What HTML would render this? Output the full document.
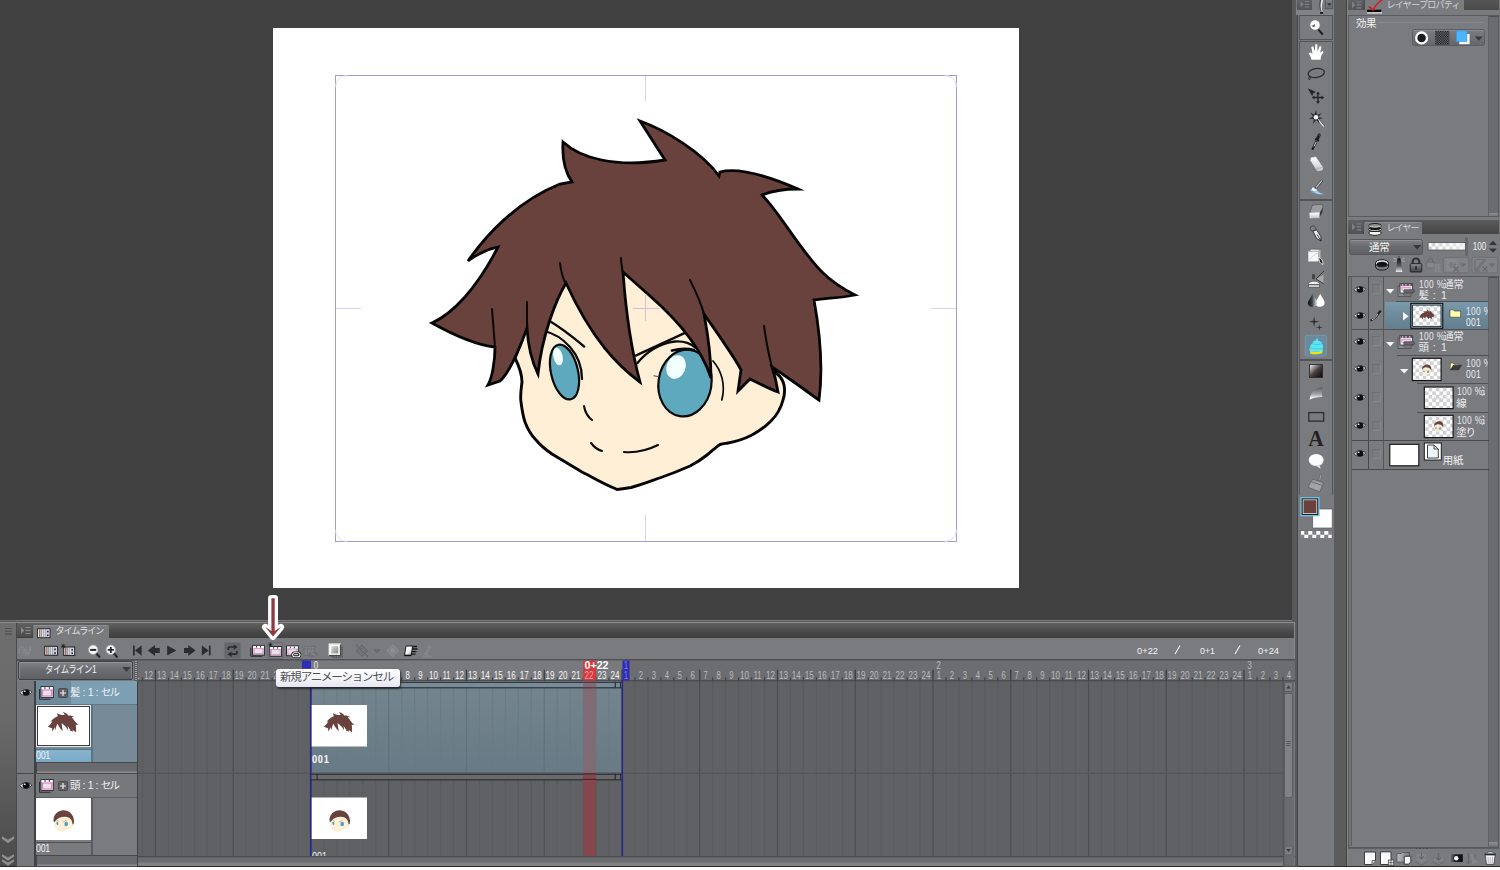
<!DOCTYPE html>
<html lang="ja">
<head>
<meta charset="utf-8">
<title>CLIP STUDIO PAINT - タイムライン</title>
<style>
*{box-sizing:border-box;margin:0;padding:0}
html,body{width:1500px;height:870px;overflow:hidden;background:#414141}
body{position:relative;font-family:"Liberation Sans","Noto Sans CJK JP",sans-serif;font-size:10px;color:#e6e6e6;line-height:1}
.a{position:absolute}
svg{position:absolute;overflow:visible}
.t{position:absolute;white-space:nowrap}
</style>
</head>
<body>
<!-- ===== canvas area ===== -->
<div class="a" id="canvas" style="left:0;top:0;width:1292px;height:621px;background:#414141"></div>
<div class="a" id="paper" style="left:273px;top:28px;width:745.5px;height:560px;background:#fff"></div>
<svg id="art" width="1291" height="620" viewBox="0 0 1291 620" style="left:0;top:0">
  <defs>
    <path id="hairp" d="M640,121 C665,130 702,152 719,176 L720,172 C738,167 768,176 798,189 C784,189 772,191 762,195 C780,213 800,250 822,272 C832,282 845,290 855,295 C840,298 826,298 814,300 C818,322 824,362 819,400 C802,388 786,376 772,367 C775,376 777,385 778,392 C770,389 758,383 750,379 L738,391 L741,370 C735,358 722,340 704,314 C708,335 711,355 711,378 C702,350 682,324 650,296 L623,272 C625,300 630,345 640,382 C618,366 592,340 566,283 C556,300 542,335 538,374 C532,362 528,345 527,328 C522,342 512,370 500,381 L488,385 C492,378 495,362 495,347 C475,345 450,333 432,323 C452,314 476,290 498,247 C488,249 476,255 468,261 C484,238 515,202 560,184 L572,182 C565,172 562,158 563,142 C580,158 615,168 665,160 Z"/>
    <path id="facep" d="M515,358 C519,366 522,374 522,382 C521,390 520,396 521,402 C522,410 523,416 525,422 C528,430 532,436 536,440 C541,446 546,450 552,454 C562,460 572,466 582,472 C594,478 604,484 614,488 L617,489.5 C622,489 626,488.500 631,487.500 C641,485 651,481 661,477.500 C671,474 681,470 690,466 C696,463 702,459 707,455 C712,451 716,447 720,444.500 C723,443.500 725,443.500 728,443 C736,441.500 744,439 751,435.500 C758,432 765,427 771,421 C777,415 781,408 783,400 C785,394 785,390 784,385 C783,380 780,376 776,373 L760,300 L640,250 L540,290 Z"/>
    <path id="capp" d="M514,352 C498,262 575,190 655,195 C745,200 806,282 789,380 C781,381 776,386 771,396 C773,332 741,292 690,286 C620,279 560,302 531,352 Z"/>
    <g id="headmini">
      <use href="#facep" fill="#ffefd6"/>
      <use href="#capp" fill="#6a423d"/>
      <ellipse cx="564.500" cy="372" rx="13.500" ry="24" transform="rotate(-13 564.500 372)" fill="#4fa3bf"/>
      <ellipse cx="685" cy="383" rx="25" ry="30" transform="rotate(9 685 383)" fill="#4fa3bf"/>
      <path d="M548,321 C560,328 573,338 584,347 M636,358 C652,350 670,340 688,333" stroke="#6a5a52" stroke-width="5" fill="none"/>
    </g>
  </defs>
  <!-- print frame -->
  <g fill="none" stroke="#9d9dd3" stroke-width="1">
    <rect x="335.5" y="75.5" width="621" height="466"/>
  </g>
  <g fill="none" stroke="#d3d3ee" stroke-width="1">
    <path d="M335.5,87 A11.500,11.500 0 0 1 347,75.5 M945,75.5 A11.500,11.500 0 0 1 956.5,87 M956.5,530 A11.500,11.500 0 0 1 945,541.5 M347,541.5 A11.500,11.500 0 0 1 335.5,530" stroke="#dedef2"/>
    <path d="M645.5,76 V101 M645.5,515 V541 M336,308.5 H361 M931,308.5 H956"/>
  </g>
  <!-- face -->
  <use href="#facep" fill="#ffefd6" stroke="#050505" stroke-width="2.9" stroke-linejoin="round"/>
  <!-- eyes -->
  <g stroke="#0a0a0a" stroke-width="2.2">
    <ellipse cx="564.500" cy="372" rx="13.500" ry="28" transform="rotate(-13 564.500 372)" fill="#5fa9be"/>
    <ellipse cx="685" cy="383" rx="26.500" ry="33.500" transform="rotate(9 685 383)" fill="#5fa9be"/>
  </g>
  <ellipse cx="558" cy="356.500" rx="4.600" ry="9" transform="rotate(-13 558 356.500)" fill="#f3ffff"/>
  <ellipse cx="676" cy="367" rx="9.500" ry="12" transform="rotate(22 676 367)" fill="#f3ffff"/>
  <!-- face lines -->
  <g fill="none" stroke="#0a0a0a" stroke-width="2.3" stroke-linecap="round">
    <path d="M547.6,319.7 C560,327 573,337 584.3,346.6"/>
    <path d="M544,331 C553,333 563,339 570,347 C577,355 582,367 582,379"/>
    <path d="M635.8,355.6 C652,348 670,340 686,332.4"/>
    <path d="M637.5,363 C646,352 660,343 675,341.5 C683,341 690,343 695,347.5"/>
    <path d="M672,350.500 C680,348.500 688,348.500 694,350" stroke-width="2.8"/>
    <path d="M713,361 C721,370 726,384 721.8,400" stroke-width="1.700"/>
    <path d="M653.8,375.8 L658,376.500" stroke-width="1" stroke="#5a4a44"/>
    <path d="M584,406 C585,412 588,417 592,420" stroke-width="2.100"/>
    <path d="M591,443 C594,447 598,450 602,451" stroke-width="2.100"/>
    <path d="M624,452 C636,453 648,450 658,445" stroke-width="2.100"/>
  </g>
  <!-- hair -->
  <use href="#hairp" fill="#6a423d" stroke="#050505" stroke-width="2.8" stroke-linejoin="miter" stroke-miterlimit="6"/>
  <g fill="none" stroke="#0a0a0a" stroke-width="2" stroke-linecap="round">
    <path d="M560,263 C561,272 563,279 566,284"/>
    <path d="M621,258 C621,263 622,268 623,273"/>
    <path d="M492,309 C493,322 494,335 495,347"/>
    <path d="M527,302 C527,311 527,320 527,329"/>
    <path d="M690,280 C696,292 701,303 704,314"/>
    <path d="M764,326 C766,340 768,353 772,367"/>
  </g>
  <!-- centre cross -->
  <path d="M645.5,295 V321 M633,308.5 H659" stroke="#cfc3dc" stroke-width="1" fill="none"/>
</svg>
<!-- ===== timeline palette ===== -->
<div class="a" style="left:0;top:620px;width:1295px;height:247px;background:#7a7b7f"></div>
<div class="a" style="left:0;top:620px;width:16px;height:246px;background:linear-gradient(#6e6e6f,#6a6a6b 40%,#4d4d4d 95%)"></div>
<div class="a" style="left:0;top:621px;width:1295px;height:1.300px;background:#58585a"></div>
<div class="a" style="left:0;top:622.300px;width:1295px;height:1px;background:#8c8c8e"></div>
<div class="a" style="left:16px;top:623px;width:1278px;height:15px;background:linear-gradient(#626263,#4a4a4a 55%,#3e3e3e)"></div>
<div class="a" style="left:16px;top:623px;width:1px;height:243px;background:#4a4a4b"></div>
<div class="a" style="left:1294px;top:622px;width:1.200px;height:244px;background:#8a8b8e"></div>
<div class="a" style="left:17px;top:624px;width:15px;height:13px;background:linear-gradient(#5e5e5f,#4c4c4d)"></div>
<div class="a" style="left:33px;top:625px;width:76px;height:13px;background:#7a7b7f;border-radius:2px 2px 0 0;border-top:1px solid #8e8f92"></div>
<div class="t" style="left:55.500px;top:627.3px;font-size:9px;letter-spacing:-0.9px;color:#e4e4e6">タイムライン</div>
<div class="a" style="left:0;top:866px;width:1500px;height:1.4px;background:#2b2b2b"></div>
<div class="a" style="left:0;top:867.4px;width:1500px;height:3px;background:#fff"></div>
<div class="a" style="left:17px;top:659px;width:1278px;height:1.5px;background:#505053"></div>
<div class="a" style="left:17.5px;top:660.5px;width:115.5px;height:19.5px;border:1px solid #3f4043;border-radius:2px;background:linear-gradient(#808185,#6c6d71 45%,#5f6064);box-shadow:inset 0 1px 0 #96979a,inset 1px 0 0 #85868a,inset -1px 0 0 #85868a"></div>
<div class="t" style="left:44.500px;top:664.2px;font-size:10.5px;letter-spacing:-0.6px;color:#f2f2f2;transform:scaleX(.8);transform-origin:0 0">タイムライン1</div>
<svg width="10" height="6" style="left:122px;top:667px"><path d="M0,0 H9 L4.5,5 Z" fill="#3d3d40"/></svg>
<div class="a" style="left:134px;top:660px;width:4px;height:21px;background:#5e5f62"></div>
<div class="a" style="left:136.800px;top:681px;width:1.400px;height:185px;background:#404144"></div>
<div class="a" style="left:135px;top:661px;width:1.5px;height:19px;background:repeating-linear-gradient(#a0a0a3 0 1px,#5e5f62 1px 2px)"></div>
<div class="a" style="left:17px;top:681px;width:17px;height:92px;background:#77787c"></div>
<div class="a" style="left:34px;top:681px;width:1.5px;height:92px;background:#404144"></div>
<div class="a" style="left:35.5px;top:681px;width:101.300px;height:22.5px;background:linear-gradient(90deg,#6e8b9d 0 35px,#7c9fb4 35px)"></div>
<div class="a" style="left:35.5px;top:703.5px;width:101.300px;height:1.5px;background:#5f7684"></div>
<div class="a" style="left:35.5px;top:705px;width:101.300px;height:57px;background:#768a97"></div>
<div class="a" style="left:91px;top:705px;width:1.5px;height:57px;background:#5e7481"></div>
<div class="a" style="left:35.5px;top:705px;width:55.5px;height:42px;background:#fff;border:1px solid #e8e8e8;box-shadow:inset 0 0 0 1px #3c3c3c,inset 0 0 0 2px #fff"></div>
<div class="a" style="left:35.5px;top:748.5px;width:55.5px;height:13.5px;background:linear-gradient(#86b4cf,#7aa9c5);border-top:1px solid #5a7080"></div>
<div class="t" style="left:35.5px;top:751px;font-size:10px;letter-spacing:-0.3px;color:#f4f4f4;transform:scaleX(.88);transform-origin:0 0">001</div>
<div class="a" style="left:35.5px;top:762px;width:101.300px;height:10.5px;background:#696a6e;border-top:1.5px solid #47484b;border-left:1.5px solid #47484b;box-shadow:inset 0 -1.5px 0 #8a8b8e"></div>
<div class="a" style="left:17px;top:772.5px;width:120px;height:1.5px;background:#47484b"></div>
<svg width="14" height="9" viewBox="0 0 14 9" style="left:19px;top:688px"><path d="M0.8,4.800 C3,1.500 8.500,0.200 13,3.900 C10.300,8.300 3.800,8.400 0.800,4.800 Z" fill="#e2e2e4" stroke="#2a2a2c" stroke-width=".8"/><ellipse cx="7.200" cy="4.500" rx="3.600" ry="3.100" fill="#0c0c0e"/><ellipse cx="5.700" cy="3.300" rx="1.100" ry=".8" fill="#fff"/></svg>
<svg width="15" height="14" viewBox="0 0 15 14" style="left:38.5px;top:685.5px"><path d="M0.5,3 V13.300 H11.500" fill="none" stroke="#2e2e2e" stroke-width="1"/><rect x="2" y="0.600" width="12.300" height="11" fill="#ececee" stroke="#2c2c2c" stroke-width="1"/><rect x="2.500" y="1.100" width="11.300" height="2.100" fill="#fafafa"/><path d="M6,1.100 v1.800 M10.300,1.100 v1.800" stroke="#3a3a3c" stroke-width="1"/><rect x="3.600" y="4" width="9.100" height="6" fill="#e6e4e8" stroke="#e56fc9" stroke-width="1"/></svg>
<svg width="10" height="10" viewBox="0 0 10 10" style="left:58px;top:687.5px"><rect x="0.5" y="0.5" width="9" height="9" rx="1" fill="#5f6064" stroke="#4b4c50"/><path d="M2,5 H8 M5,2 V8" stroke="#f0f0f0" stroke-width="1.200"/></svg>
<div class="t" style="left:70px;top:686.5px;font-size:10.500px;letter-spacing:-1.6px;color:#f0f0f2">髪<span style="letter-spacing:0;word-spacing:-0.800px;margin-left:1.600px"> : 1 : </span>セル</div>
<div class="a" style="left:17px;top:774px;width:17px;height:92px;background:#77787c"></div>
<div class="a" style="left:34px;top:774px;width:1.5px;height:92px;background:#404144"></div>
<div class="a" style="left:35.5px;top:774px;width:101.300px;height:22.5px;background:linear-gradient(90deg,#77787c 0 35px,#77787c 35px)"></div>
<div class="a" style="left:35.5px;top:796.5px;width:101.300px;height:1.5px;background:#5c5d60"></div>
<div class="a" style="left:35.5px;top:798px;width:101.300px;height:57px;background:#7a7b7f"></div>
<div class="a" style="left:91px;top:798px;width:1.5px;height:57px;background:#5a5b5e"></div>
<div class="a" style="left:35.5px;top:798px;width:55.5px;height:42px;background:#fff"></div>
<div class="a" style="left:35.5px;top:841.5px;width:55.5px;height:13.5px;background:#7a7b7f;border-top:1px solid #505154"></div>
<div class="t" style="left:35.5px;top:844px;font-size:10px;letter-spacing:-0.3px;color:#f4f4f4;transform:scaleX(.88);transform-origin:0 0">001</div>
<div class="a" style="left:35.5px;top:855px;width:101.300px;height:10.5px;background:#696a6e;border-top:1.5px solid #47484b;border-left:1.5px solid #47484b;box-shadow:inset 0 -1.5px 0 #8a8b8e"></div>
<div class="a" style="left:17px;top:865.5px;width:120px;height:1.5px;background:#47484b"></div>
<svg width="14" height="9" viewBox="0 0 14 9" style="left:19px;top:781px"><path d="M0.8,4.800 C3,1.500 8.500,0.200 13,3.900 C10.300,8.300 3.800,8.400 0.800,4.800 Z" fill="#e2e2e4" stroke="#2a2a2c" stroke-width=".8"/><ellipse cx="7.200" cy="4.500" rx="3.600" ry="3.100" fill="#0c0c0e"/><ellipse cx="5.700" cy="3.300" rx="1.100" ry=".8" fill="#fff"/></svg>
<svg width="15" height="14" viewBox="0 0 15 14" style="left:38.5px;top:778.5px"><path d="M0.5,3 V13.300 H11.500" fill="none" stroke="#2e2e2e" stroke-width="1"/><rect x="2" y="0.600" width="12.300" height="11" fill="#ececee" stroke="#2c2c2c" stroke-width="1"/><rect x="2.500" y="1.100" width="11.300" height="2.100" fill="#fafafa"/><path d="M6,1.100 v1.800 M10.300,1.100 v1.800" stroke="#3a3a3c" stroke-width="1"/><rect x="3.600" y="4" width="9.100" height="6" fill="#e6e4e8" stroke="#e56fc9" stroke-width="1"/></svg>
<svg width="10" height="10" viewBox="0 0 10 10" style="left:58px;top:780.5px"><rect x="0.5" y="0.5" width="9" height="9" rx="1" fill="#5f6064" stroke="#4b4c50"/><path d="M2,5 H8 M5,2 V8" stroke="#f0f0f0" stroke-width="1.200"/></svg>
<div class="t" style="left:70px;top:779.5px;font-size:10.500px;letter-spacing:-1.6px;color:#f0f0f2">頭<span style="letter-spacing:0;word-spacing:-0.800px;margin-left:1.600px"> : 1 : </span>セル</div>
<svg id="tl" width="1295" height="870" viewBox="0 0 1295 870" style="left:0;top:0;font-family:'Liberation Sans',sans-serif">
<defs><clipPath id="cr"><rect x="138" y="660" width="1157" height="206"/></clipPath><linearGradient id="clipbg" x1="0" x2="0" y1="0" y2="1"><stop offset="0" stop-color="#74858f"/><stop offset="1" stop-color="#687a85"/></linearGradient></defs>
<g clip-path="url(#cr)">
<rect x="138" y="660.5" width="1157" height="20" fill="#6c6d71"/>
<rect x="311" y="660.5" width="311.500" height="20" fill="#797a7e"/>
<rect x="138" y="680.3" width="1157" height="1.4" fill="#3e3f42"/>
<rect x="138" y="681.5" width="1146" height="175" fill="#606165"/>
<rect x="311" y="681.5" width="311" height="91" fill="url(#clipbg)"/>
<rect x="141.94" y="681.5" width="1.2" height="91" fill="#5a5b5f"/>
<rect x="141.94" y="773" width="1.2" height="84" fill="#5a5b5f"/>
<rect x="154.90" y="681.5" width="1.2" height="91" fill="#4d4e52"/>
<rect x="154.90" y="773" width="1.2" height="84" fill="#4d4e52"/>
<rect x="167.86" y="681.5" width="1.2" height="91" fill="#5a5b5f"/>
<rect x="167.86" y="773" width="1.2" height="84" fill="#5a5b5f"/>
<rect x="180.82" y="681.5" width="1.2" height="91" fill="#5a5b5f"/>
<rect x="180.82" y="773" width="1.2" height="84" fill="#5a5b5f"/>
<rect x="193.78" y="681.5" width="1.2" height="91" fill="#5a5b5f"/>
<rect x="193.78" y="773" width="1.2" height="84" fill="#5a5b5f"/>
<rect x="206.73" y="681.5" width="1.2" height="91" fill="#5a5b5f"/>
<rect x="206.73" y="773" width="1.2" height="84" fill="#5a5b5f"/>
<rect x="219.69" y="681.5" width="1.2" height="91" fill="#5a5b5f"/>
<rect x="219.69" y="773" width="1.2" height="84" fill="#5a5b5f"/>
<rect x="232.65" y="681.5" width="1.2" height="91" fill="#4d4e52"/>
<rect x="232.65" y="773" width="1.2" height="84" fill="#4d4e52"/>
<rect x="245.61" y="681.5" width="1.2" height="91" fill="#5a5b5f"/>
<rect x="245.61" y="773" width="1.2" height="84" fill="#5a5b5f"/>
<rect x="258.57" y="681.5" width="1.2" height="91" fill="#5a5b5f"/>
<rect x="258.57" y="773" width="1.2" height="84" fill="#5a5b5f"/>
<rect x="271.52" y="681.5" width="1.2" height="91" fill="#5a5b5f"/>
<rect x="271.52" y="773" width="1.2" height="84" fill="#5a5b5f"/>
<rect x="284.48" y="681.5" width="1.2" height="91" fill="#5a5b5f"/>
<rect x="284.48" y="773" width="1.2" height="84" fill="#5a5b5f"/>
<rect x="297.44" y="681.5" width="1.2" height="91" fill="#5a5b5f"/>
<rect x="297.44" y="773" width="1.2" height="84" fill="#5a5b5f"/>
<rect x="310.40" y="681.5" width="1.2" height="91" fill="#4d4e52"/>
<rect x="310.40" y="773" width="1.2" height="84" fill="#4d4e52"/>
<rect x="323.36" y="681.5" width="1.2" height="91" fill="#6a7b86"/>
<rect x="323.36" y="773" width="1.2" height="84" fill="#5a5b5f"/>
<rect x="336.32" y="681.5" width="1.2" height="91" fill="#6a7b86"/>
<rect x="336.32" y="773" width="1.2" height="84" fill="#5a5b5f"/>
<rect x="349.27" y="681.5" width="1.2" height="91" fill="#6a7b86"/>
<rect x="349.27" y="773" width="1.2" height="84" fill="#5a5b5f"/>
<rect x="362.23" y="681.5" width="1.2" height="91" fill="#6a7b86"/>
<rect x="362.23" y="773" width="1.2" height="84" fill="#5a5b5f"/>
<rect x="375.19" y="681.5" width="1.2" height="91" fill="#6a7b86"/>
<rect x="375.19" y="773" width="1.2" height="84" fill="#5a5b5f"/>
<rect x="388.15" y="681.5" width="1.2" height="91" fill="#61727d"/>
<rect x="388.15" y="773" width="1.2" height="84" fill="#4d4e52"/>
<rect x="401.11" y="681.5" width="1.2" height="91" fill="#6a7b86"/>
<rect x="401.11" y="773" width="1.2" height="84" fill="#5a5b5f"/>
<rect x="414.07" y="681.5" width="1.2" height="91" fill="#6a7b86"/>
<rect x="414.07" y="773" width="1.2" height="84" fill="#5a5b5f"/>
<rect x="427.02" y="681.5" width="1.2" height="91" fill="#6a7b86"/>
<rect x="427.02" y="773" width="1.2" height="84" fill="#5a5b5f"/>
<rect x="439.98" y="681.5" width="1.2" height="91" fill="#6a7b86"/>
<rect x="439.98" y="773" width="1.2" height="84" fill="#5a5b5f"/>
<rect x="452.94" y="681.5" width="1.2" height="91" fill="#6a7b86"/>
<rect x="452.94" y="773" width="1.2" height="84" fill="#5a5b5f"/>
<rect x="465.90" y="681.5" width="1.2" height="91" fill="#61727d"/>
<rect x="465.90" y="773" width="1.2" height="84" fill="#4d4e52"/>
<rect x="478.86" y="681.5" width="1.2" height="91" fill="#6a7b86"/>
<rect x="478.86" y="773" width="1.2" height="84" fill="#5a5b5f"/>
<rect x="491.82" y="681.5" width="1.2" height="91" fill="#6a7b86"/>
<rect x="491.82" y="773" width="1.2" height="84" fill="#5a5b5f"/>
<rect x="504.77" y="681.5" width="1.2" height="91" fill="#6a7b86"/>
<rect x="504.77" y="773" width="1.2" height="84" fill="#5a5b5f"/>
<rect x="517.73" y="681.5" width="1.2" height="91" fill="#6a7b86"/>
<rect x="517.73" y="773" width="1.2" height="84" fill="#5a5b5f"/>
<rect x="530.69" y="681.5" width="1.2" height="91" fill="#6a7b86"/>
<rect x="530.69" y="773" width="1.2" height="84" fill="#5a5b5f"/>
<rect x="543.65" y="681.5" width="1.2" height="91" fill="#61727d"/>
<rect x="543.65" y="773" width="1.2" height="84" fill="#4d4e52"/>
<rect x="556.61" y="681.5" width="1.2" height="91" fill="#6a7b86"/>
<rect x="556.61" y="773" width="1.2" height="84" fill="#5a5b5f"/>
<rect x="569.57" y="681.5" width="1.2" height="91" fill="#6a7b86"/>
<rect x="569.57" y="773" width="1.2" height="84" fill="#5a5b5f"/>
<rect x="582.52" y="681.5" width="1.2" height="91" fill="#6a7b86"/>
<rect x="582.52" y="773" width="1.2" height="84" fill="#5a5b5f"/>
<rect x="595.48" y="681.5" width="1.2" height="91" fill="#6a7b86"/>
<rect x="595.48" y="773" width="1.2" height="84" fill="#5a5b5f"/>
<rect x="608.44" y="681.5" width="1.2" height="91" fill="#6a7b86"/>
<rect x="608.44" y="773" width="1.2" height="84" fill="#5a5b5f"/>
<rect x="621.40" y="681.5" width="1.2" height="91" fill="#4d4e52"/>
<rect x="621.40" y="773" width="1.2" height="84" fill="#4d4e52"/>
<rect x="634.36" y="681.5" width="1.2" height="91" fill="#5a5b5f"/>
<rect x="634.36" y="773" width="1.2" height="84" fill="#5a5b5f"/>
<rect x="647.32" y="681.5" width="1.2" height="91" fill="#5a5b5f"/>
<rect x="647.32" y="773" width="1.2" height="84" fill="#5a5b5f"/>
<rect x="660.27" y="681.5" width="1.2" height="91" fill="#5a5b5f"/>
<rect x="660.27" y="773" width="1.2" height="84" fill="#5a5b5f"/>
<rect x="673.23" y="681.5" width="1.2" height="91" fill="#5a5b5f"/>
<rect x="673.23" y="773" width="1.2" height="84" fill="#5a5b5f"/>
<rect x="686.19" y="681.5" width="1.2" height="91" fill="#5a5b5f"/>
<rect x="686.19" y="773" width="1.2" height="84" fill="#5a5b5f"/>
<rect x="699.15" y="681.5" width="1.2" height="91" fill="#4d4e52"/>
<rect x="699.15" y="773" width="1.2" height="84" fill="#4d4e52"/>
<rect x="712.11" y="681.5" width="1.2" height="91" fill="#5a5b5f"/>
<rect x="712.11" y="773" width="1.2" height="84" fill="#5a5b5f"/>
<rect x="725.07" y="681.5" width="1.2" height="91" fill="#5a5b5f"/>
<rect x="725.07" y="773" width="1.2" height="84" fill="#5a5b5f"/>
<rect x="738.02" y="681.5" width="1.2" height="91" fill="#5a5b5f"/>
<rect x="738.02" y="773" width="1.2" height="84" fill="#5a5b5f"/>
<rect x="750.98" y="681.5" width="1.2" height="91" fill="#5a5b5f"/>
<rect x="750.98" y="773" width="1.2" height="84" fill="#5a5b5f"/>
<rect x="763.94" y="681.5" width="1.2" height="91" fill="#5a5b5f"/>
<rect x="763.94" y="773" width="1.2" height="84" fill="#5a5b5f"/>
<rect x="776.90" y="681.5" width="1.2" height="91" fill="#4d4e52"/>
<rect x="776.90" y="773" width="1.2" height="84" fill="#4d4e52"/>
<rect x="789.86" y="681.5" width="1.2" height="91" fill="#5a5b5f"/>
<rect x="789.86" y="773" width="1.2" height="84" fill="#5a5b5f"/>
<rect x="802.82" y="681.5" width="1.2" height="91" fill="#5a5b5f"/>
<rect x="802.82" y="773" width="1.2" height="84" fill="#5a5b5f"/>
<rect x="815.77" y="681.5" width="1.2" height="91" fill="#5a5b5f"/>
<rect x="815.77" y="773" width="1.2" height="84" fill="#5a5b5f"/>
<rect x="828.73" y="681.5" width="1.2" height="91" fill="#5a5b5f"/>
<rect x="828.73" y="773" width="1.2" height="84" fill="#5a5b5f"/>
<rect x="841.69" y="681.5" width="1.2" height="91" fill="#5a5b5f"/>
<rect x="841.69" y="773" width="1.2" height="84" fill="#5a5b5f"/>
<rect x="854.65" y="681.5" width="1.2" height="91" fill="#4d4e52"/>
<rect x="854.65" y="773" width="1.2" height="84" fill="#4d4e52"/>
<rect x="867.61" y="681.5" width="1.2" height="91" fill="#5a5b5f"/>
<rect x="867.61" y="773" width="1.2" height="84" fill="#5a5b5f"/>
<rect x="880.57" y="681.5" width="1.2" height="91" fill="#5a5b5f"/>
<rect x="880.57" y="773" width="1.2" height="84" fill="#5a5b5f"/>
<rect x="893.52" y="681.5" width="1.2" height="91" fill="#5a5b5f"/>
<rect x="893.52" y="773" width="1.2" height="84" fill="#5a5b5f"/>
<rect x="906.48" y="681.5" width="1.2" height="91" fill="#5a5b5f"/>
<rect x="906.48" y="773" width="1.2" height="84" fill="#5a5b5f"/>
<rect x="919.44" y="681.5" width="1.2" height="91" fill="#5a5b5f"/>
<rect x="919.44" y="773" width="1.2" height="84" fill="#5a5b5f"/>
<rect x="932.40" y="681.5" width="1.2" height="91" fill="#4d4e52"/>
<rect x="932.40" y="773" width="1.2" height="84" fill="#4d4e52"/>
<rect x="945.36" y="681.5" width="1.2" height="91" fill="#5a5b5f"/>
<rect x="945.36" y="773" width="1.2" height="84" fill="#5a5b5f"/>
<rect x="958.32" y="681.5" width="1.2" height="91" fill="#5a5b5f"/>
<rect x="958.32" y="773" width="1.2" height="84" fill="#5a5b5f"/>
<rect x="971.27" y="681.5" width="1.2" height="91" fill="#5a5b5f"/>
<rect x="971.27" y="773" width="1.2" height="84" fill="#5a5b5f"/>
<rect x="984.23" y="681.5" width="1.2" height="91" fill="#5a5b5f"/>
<rect x="984.23" y="773" width="1.2" height="84" fill="#5a5b5f"/>
<rect x="997.19" y="681.5" width="1.2" height="91" fill="#5a5b5f"/>
<rect x="997.19" y="773" width="1.2" height="84" fill="#5a5b5f"/>
<rect x="1010.15" y="681.5" width="1.2" height="91" fill="#4d4e52"/>
<rect x="1010.15" y="773" width="1.2" height="84" fill="#4d4e52"/>
<rect x="1023.11" y="681.5" width="1.2" height="91" fill="#5a5b5f"/>
<rect x="1023.11" y="773" width="1.2" height="84" fill="#5a5b5f"/>
<rect x="1036.07" y="681.5" width="1.2" height="91" fill="#5a5b5f"/>
<rect x="1036.07" y="773" width="1.2" height="84" fill="#5a5b5f"/>
<rect x="1049.03" y="681.5" width="1.2" height="91" fill="#5a5b5f"/>
<rect x="1049.03" y="773" width="1.2" height="84" fill="#5a5b5f"/>
<rect x="1061.98" y="681.5" width="1.2" height="91" fill="#5a5b5f"/>
<rect x="1061.98" y="773" width="1.2" height="84" fill="#5a5b5f"/>
<rect x="1074.94" y="681.5" width="1.2" height="91" fill="#5a5b5f"/>
<rect x="1074.94" y="773" width="1.2" height="84" fill="#5a5b5f"/>
<rect x="1087.90" y="681.5" width="1.2" height="91" fill="#4d4e52"/>
<rect x="1087.90" y="773" width="1.2" height="84" fill="#4d4e52"/>
<rect x="1100.86" y="681.5" width="1.2" height="91" fill="#5a5b5f"/>
<rect x="1100.86" y="773" width="1.2" height="84" fill="#5a5b5f"/>
<rect x="1113.82" y="681.5" width="1.2" height="91" fill="#5a5b5f"/>
<rect x="1113.82" y="773" width="1.2" height="84" fill="#5a5b5f"/>
<rect x="1126.78" y="681.5" width="1.2" height="91" fill="#5a5b5f"/>
<rect x="1126.78" y="773" width="1.2" height="84" fill="#5a5b5f"/>
<rect x="1139.73" y="681.5" width="1.2" height="91" fill="#5a5b5f"/>
<rect x="1139.73" y="773" width="1.2" height="84" fill="#5a5b5f"/>
<rect x="1152.69" y="681.5" width="1.2" height="91" fill="#5a5b5f"/>
<rect x="1152.69" y="773" width="1.2" height="84" fill="#5a5b5f"/>
<rect x="1165.65" y="681.5" width="1.2" height="91" fill="#4d4e52"/>
<rect x="1165.65" y="773" width="1.2" height="84" fill="#4d4e52"/>
<rect x="1178.61" y="681.5" width="1.2" height="91" fill="#5a5b5f"/>
<rect x="1178.61" y="773" width="1.2" height="84" fill="#5a5b5f"/>
<rect x="1191.57" y="681.5" width="1.2" height="91" fill="#5a5b5f"/>
<rect x="1191.57" y="773" width="1.2" height="84" fill="#5a5b5f"/>
<rect x="1204.53" y="681.5" width="1.2" height="91" fill="#5a5b5f"/>
<rect x="1204.53" y="773" width="1.2" height="84" fill="#5a5b5f"/>
<rect x="1217.48" y="681.5" width="1.2" height="91" fill="#5a5b5f"/>
<rect x="1217.48" y="773" width="1.2" height="84" fill="#5a5b5f"/>
<rect x="1230.44" y="681.5" width="1.2" height="91" fill="#5a5b5f"/>
<rect x="1230.44" y="773" width="1.2" height="84" fill="#5a5b5f"/>
<rect x="1243.40" y="681.5" width="1.2" height="91" fill="#4d4e52"/>
<rect x="1243.40" y="773" width="1.2" height="84" fill="#4d4e52"/>
<rect x="1256.36" y="681.5" width="1.2" height="91" fill="#5a5b5f"/>
<rect x="1256.36" y="773" width="1.2" height="84" fill="#5a5b5f"/>
<rect x="1269.32" y="681.5" width="1.2" height="91" fill="#5a5b5f"/>
<rect x="1269.32" y="773" width="1.2" height="84" fill="#5a5b5f"/>
<rect x="1282.28" y="681.5" width="1.2" height="91" fill="#5a5b5f"/>
<rect x="1282.28" y="773" width="1.2" height="84" fill="#5a5b5f"/>
<rect x="141.94" y="677.400" width="1.2" height="3.200" fill="#3e3f42"/>
<rect x="154.90" y="669.700" width="1.2" height="11" fill="#38393c"/>
<rect x="167.86" y="677.400" width="1.2" height="3.200" fill="#3e3f42"/>
<rect x="180.82" y="677.400" width="1.2" height="3.200" fill="#3e3f42"/>
<rect x="193.78" y="677.400" width="1.2" height="3.200" fill="#3e3f42"/>
<rect x="206.73" y="677.400" width="1.2" height="3.200" fill="#3e3f42"/>
<rect x="219.69" y="677.400" width="1.2" height="3.200" fill="#3e3f42"/>
<rect x="232.65" y="669.700" width="1.2" height="11" fill="#38393c"/>
<rect x="245.61" y="677.400" width="1.2" height="3.200" fill="#3e3f42"/>
<rect x="258.57" y="677.400" width="1.2" height="3.200" fill="#3e3f42"/>
<rect x="271.52" y="677.400" width="1.2" height="3.200" fill="#3e3f42"/>
<rect x="284.48" y="677.400" width="1.2" height="3.200" fill="#3e3f42"/>
<rect x="297.44" y="677.400" width="1.2" height="3.200" fill="#3e3f42"/>
<rect x="310.40" y="669.700" width="1.2" height="11" fill="#38393c"/>
<rect x="323.36" y="677.400" width="1.2" height="3.200" fill="#3e3f42"/>
<rect x="336.32" y="677.400" width="1.2" height="3.200" fill="#3e3f42"/>
<rect x="349.27" y="677.400" width="1.2" height="3.200" fill="#3e3f42"/>
<rect x="362.23" y="677.400" width="1.2" height="3.200" fill="#3e3f42"/>
<rect x="375.19" y="677.400" width="1.2" height="3.200" fill="#3e3f42"/>
<rect x="388.15" y="669.700" width="1.2" height="11" fill="#38393c"/>
<rect x="401.11" y="677.400" width="1.2" height="3.200" fill="#3e3f42"/>
<rect x="414.07" y="677.400" width="1.2" height="3.200" fill="#3e3f42"/>
<rect x="427.02" y="677.400" width="1.2" height="3.200" fill="#3e3f42"/>
<rect x="439.98" y="677.400" width="1.2" height="3.200" fill="#3e3f42"/>
<rect x="452.94" y="677.400" width="1.2" height="3.200" fill="#3e3f42"/>
<rect x="465.90" y="669.700" width="1.2" height="11" fill="#38393c"/>
<rect x="478.86" y="677.400" width="1.2" height="3.200" fill="#3e3f42"/>
<rect x="491.82" y="677.400" width="1.2" height="3.200" fill="#3e3f42"/>
<rect x="504.77" y="677.400" width="1.2" height="3.200" fill="#3e3f42"/>
<rect x="517.73" y="677.400" width="1.2" height="3.200" fill="#3e3f42"/>
<rect x="530.69" y="677.400" width="1.2" height="3.200" fill="#3e3f42"/>
<rect x="543.65" y="669.700" width="1.2" height="11" fill="#38393c"/>
<rect x="556.61" y="677.400" width="1.2" height="3.200" fill="#3e3f42"/>
<rect x="569.57" y="677.400" width="1.2" height="3.200" fill="#3e3f42"/>
<rect x="582.52" y="677.400" width="1.2" height="3.200" fill="#3e3f42"/>
<rect x="595.48" y="677.400" width="1.2" height="3.200" fill="#3e3f42"/>
<rect x="608.44" y="677.400" width="1.2" height="3.200" fill="#3e3f42"/>
<rect x="621.40" y="669.700" width="1.2" height="11" fill="#38393c"/>
<rect x="634.36" y="677.400" width="1.2" height="3.200" fill="#3e3f42"/>
<rect x="647.32" y="677.400" width="1.2" height="3.200" fill="#3e3f42"/>
<rect x="660.27" y="677.400" width="1.2" height="3.200" fill="#3e3f42"/>
<rect x="673.23" y="677.400" width="1.2" height="3.200" fill="#3e3f42"/>
<rect x="686.19" y="677.400" width="1.2" height="3.200" fill="#3e3f42"/>
<rect x="699.15" y="669.700" width="1.2" height="11" fill="#38393c"/>
<rect x="712.11" y="677.400" width="1.2" height="3.200" fill="#3e3f42"/>
<rect x="725.07" y="677.400" width="1.2" height="3.200" fill="#3e3f42"/>
<rect x="738.02" y="677.400" width="1.2" height="3.200" fill="#3e3f42"/>
<rect x="750.98" y="677.400" width="1.2" height="3.200" fill="#3e3f42"/>
<rect x="763.94" y="677.400" width="1.2" height="3.200" fill="#3e3f42"/>
<rect x="776.90" y="669.700" width="1.2" height="11" fill="#38393c"/>
<rect x="789.86" y="677.400" width="1.2" height="3.200" fill="#3e3f42"/>
<rect x="802.82" y="677.400" width="1.2" height="3.200" fill="#3e3f42"/>
<rect x="815.77" y="677.400" width="1.2" height="3.200" fill="#3e3f42"/>
<rect x="828.73" y="677.400" width="1.2" height="3.200" fill="#3e3f42"/>
<rect x="841.69" y="677.400" width="1.2" height="3.200" fill="#3e3f42"/>
<rect x="854.65" y="669.700" width="1.2" height="11" fill="#38393c"/>
<rect x="867.61" y="677.400" width="1.2" height="3.200" fill="#3e3f42"/>
<rect x="880.57" y="677.400" width="1.2" height="3.200" fill="#3e3f42"/>
<rect x="893.52" y="677.400" width="1.2" height="3.200" fill="#3e3f42"/>
<rect x="906.48" y="677.400" width="1.2" height="3.200" fill="#3e3f42"/>
<rect x="919.44" y="677.400" width="1.2" height="3.200" fill="#3e3f42"/>
<rect x="932.40" y="669.700" width="1.2" height="11" fill="#38393c"/>
<rect x="945.36" y="677.400" width="1.2" height="3.200" fill="#3e3f42"/>
<rect x="958.32" y="677.400" width="1.2" height="3.200" fill="#3e3f42"/>
<rect x="971.27" y="677.400" width="1.2" height="3.200" fill="#3e3f42"/>
<rect x="984.23" y="677.400" width="1.2" height="3.200" fill="#3e3f42"/>
<rect x="997.19" y="677.400" width="1.2" height="3.200" fill="#3e3f42"/>
<rect x="1010.15" y="669.700" width="1.2" height="11" fill="#38393c"/>
<rect x="1023.11" y="677.400" width="1.2" height="3.200" fill="#3e3f42"/>
<rect x="1036.07" y="677.400" width="1.2" height="3.200" fill="#3e3f42"/>
<rect x="1049.03" y="677.400" width="1.2" height="3.200" fill="#3e3f42"/>
<rect x="1061.98" y="677.400" width="1.2" height="3.200" fill="#3e3f42"/>
<rect x="1074.94" y="677.400" width="1.2" height="3.200" fill="#3e3f42"/>
<rect x="1087.90" y="669.700" width="1.2" height="11" fill="#38393c"/>
<rect x="1100.86" y="677.400" width="1.2" height="3.200" fill="#3e3f42"/>
<rect x="1113.82" y="677.400" width="1.2" height="3.200" fill="#3e3f42"/>
<rect x="1126.78" y="677.400" width="1.2" height="3.200" fill="#3e3f42"/>
<rect x="1139.73" y="677.400" width="1.2" height="3.200" fill="#3e3f42"/>
<rect x="1152.69" y="677.400" width="1.2" height="3.200" fill="#3e3f42"/>
<rect x="1165.65" y="669.700" width="1.2" height="11" fill="#38393c"/>
<rect x="1178.61" y="677.400" width="1.2" height="3.200" fill="#3e3f42"/>
<rect x="1191.57" y="677.400" width="1.2" height="3.200" fill="#3e3f42"/>
<rect x="1204.53" y="677.400" width="1.2" height="3.200" fill="#3e3f42"/>
<rect x="1217.48" y="677.400" width="1.2" height="3.200" fill="#3e3f42"/>
<rect x="1230.44" y="677.400" width="1.2" height="3.200" fill="#3e3f42"/>
<rect x="1243.40" y="669.700" width="1.2" height="11" fill="#38393c"/>
<rect x="1256.36" y="677.400" width="1.2" height="3.200" fill="#3e3f42"/>
<rect x="1269.32" y="677.400" width="1.2" height="3.200" fill="#3e3f42"/>
<rect x="1282.28" y="677.400" width="1.2" height="3.200" fill="#3e3f42"/>
<rect x="1295.23" y="677.400" width="1.2" height="3.200" fill="#3e3f42"/>
<rect x="138" y="772.700" width="1146" height="1.1" fill="#535458"/>
<rect x="311" y="681.6" width="311" height="6.5" fill="#778c99"/>
<rect x="311" y="681.8000000000001" width="311" height="1.1" fill="#2f3033"/>
<rect x="311" y="687.2" width="311" height="1.2" fill="#2f3033"/>
<rect x="614.600" y="681.6" width="1.300" height="6.5" fill="#2f3033"/>
<rect x="620" y="681.6" width="1.2" height="6.5" fill="#2f3033"/>
<rect x="311" y="773.6" width="311" height="6.5" fill="#696a6e"/>
<rect x="311" y="773.8000000000001" width="311" height="1.1" fill="#2f3033"/>
<rect x="311" y="779.2" width="311" height="1.2" fill="#2f3033"/>
<rect x="614.600" y="773.6" width="1.300" height="6.5" fill="#2f3033"/>
<rect x="620" y="773.6" width="1.2" height="6.5" fill="#2f3033"/>
<rect x="316.500" y="773.6" width="1.2" height="6.5" fill="#2f3033"/>
<rect x="583.12" y="660.5" width="12.96" height="20" fill="#cf3b40"/>
<rect x="583.12" y="681.5" width="12.96" height="91" fill="#7e6b74"/>
<rect x="583.12" y="681.8" width="12.96" height="6.3" fill="#97737c" opacity=".0"/>
<rect x="583.12" y="773" width="12.96" height="84" fill="#84474d"/>
<rect x="583.12" y="773.4" width="12.96" height="1.1" fill="#4a2528"/><rect x="583.12" y="778.8" width="12.96" height="1.2" fill="#4a2528"/>
<rect x="583.12" y="681.8" width="12.96" height="1.1" fill="#50333a"/><rect x="583.12" y="687.2" width="12.96" height="1.2" fill="#50333a"/>
<rect x="302" y="660.5" width="9" height="20" fill="#2d2db5"/>
<rect x="622.500" y="660.5" width="7" height="20" fill="#2d2db5"/>
<rect x="309.900" y="680" width="1.600" height="177" fill="#26268c"/>
<rect x="621.600" y="680" width="1.500" height="177" fill="#26268c"/>
<text x="135.5" y="679.300" font-size="11.300" fill="#b9b9bc" text-anchor="middle" textLength="7.6" lengthAdjust="spacingAndGlyphs">11</text>
<text x="148.4" y="679.300" font-size="11.300" fill="#b9b9bc" text-anchor="middle" textLength="9.0" lengthAdjust="spacingAndGlyphs">12</text>
<text x="161.4" y="679.300" font-size="11.300" fill="#b9b9bc" text-anchor="middle" textLength="9.0" lengthAdjust="spacingAndGlyphs">13</text>
<text x="174.3" y="679.300" font-size="11.300" fill="#b9b9bc" text-anchor="middle" textLength="9.0" lengthAdjust="spacingAndGlyphs">14</text>
<text x="187.3" y="679.300" font-size="11.300" fill="#b9b9bc" text-anchor="middle" textLength="9.0" lengthAdjust="spacingAndGlyphs">15</text>
<text x="200.3" y="679.300" font-size="11.300" fill="#b9b9bc" text-anchor="middle" textLength="9.0" lengthAdjust="spacingAndGlyphs">16</text>
<text x="213.2" y="679.300" font-size="11.300" fill="#b9b9bc" text-anchor="middle" textLength="9.0" lengthAdjust="spacingAndGlyphs">17</text>
<text x="226.2" y="679.300" font-size="11.300" fill="#b9b9bc" text-anchor="middle" textLength="9.0" lengthAdjust="spacingAndGlyphs">18</text>
<text x="239.1" y="679.300" font-size="11.300" fill="#b9b9bc" text-anchor="middle" textLength="9.0" lengthAdjust="spacingAndGlyphs">19</text>
<text x="252.1" y="679.300" font-size="11.300" fill="#b9b9bc" text-anchor="middle" textLength="9.0" lengthAdjust="spacingAndGlyphs">20</text>
<text x="265.0" y="679.300" font-size="11.300" fill="#b9b9bc" text-anchor="middle" textLength="9.0" lengthAdjust="spacingAndGlyphs">21</text>
<text x="278.0" y="679.300" font-size="11.300" fill="#b9b9bc" text-anchor="middle" textLength="9.0" lengthAdjust="spacingAndGlyphs">22</text>
<text x="291.0" y="679.300" font-size="11.300" fill="#b9b9bc" text-anchor="middle" textLength="9.0" lengthAdjust="spacingAndGlyphs">23</text>
<text x="303.9" y="679.300" font-size="11.300" fill="#b9b9bc" text-anchor="middle" textLength="9.0" lengthAdjust="spacingAndGlyphs">24</text>
<text x="407.6" y="679.300" font-size="11.300" fill="#f4f4f4" text-anchor="middle" textLength="4.3" lengthAdjust="spacingAndGlyphs">8</text>
<text x="420.5" y="679.300" font-size="11.300" fill="#f4f4f4" text-anchor="middle" textLength="4.3" lengthAdjust="spacingAndGlyphs">9</text>
<text x="433.5" y="679.300" font-size="11.300" fill="#f4f4f4" text-anchor="middle" textLength="9.0" lengthAdjust="spacingAndGlyphs">10</text>
<text x="446.5" y="679.300" font-size="11.300" fill="#f4f4f4" text-anchor="middle" textLength="7.6" lengthAdjust="spacingAndGlyphs">11</text>
<text x="459.4" y="679.300" font-size="11.300" fill="#f4f4f4" text-anchor="middle" textLength="9.0" lengthAdjust="spacingAndGlyphs">12</text>
<text x="472.4" y="679.300" font-size="11.300" fill="#f4f4f4" text-anchor="middle" textLength="9.0" lengthAdjust="spacingAndGlyphs">13</text>
<text x="485.3" y="679.300" font-size="11.300" fill="#f4f4f4" text-anchor="middle" textLength="9.0" lengthAdjust="spacingAndGlyphs">14</text>
<text x="498.3" y="679.300" font-size="11.300" fill="#f4f4f4" text-anchor="middle" textLength="9.0" lengthAdjust="spacingAndGlyphs">15</text>
<text x="511.3" y="679.300" font-size="11.300" fill="#f4f4f4" text-anchor="middle" textLength="9.0" lengthAdjust="spacingAndGlyphs">16</text>
<text x="524.2" y="679.300" font-size="11.300" fill="#f4f4f4" text-anchor="middle" textLength="9.0" lengthAdjust="spacingAndGlyphs">17</text>
<text x="537.2" y="679.300" font-size="11.300" fill="#f4f4f4" text-anchor="middle" textLength="9.0" lengthAdjust="spacingAndGlyphs">18</text>
<text x="550.1" y="679.300" font-size="11.300" fill="#f4f4f4" text-anchor="middle" textLength="9.0" lengthAdjust="spacingAndGlyphs">19</text>
<text x="563.1" y="679.300" font-size="11.300" fill="#f4f4f4" text-anchor="middle" textLength="9.0" lengthAdjust="spacingAndGlyphs">20</text>
<text x="576.0" y="679.300" font-size="11.300" fill="#f4f4f4" text-anchor="middle" textLength="9.0" lengthAdjust="spacingAndGlyphs">21</text>
<text x="589.0" y="679.300" font-size="11.300" fill="#ff9d9d" text-anchor="middle" textLength="9.0" lengthAdjust="spacingAndGlyphs">22</text>
<text x="602.0" y="679.300" font-size="11.300" fill="#f4f4f4" text-anchor="middle" textLength="9.0" lengthAdjust="spacingAndGlyphs">23</text>
<text x="614.9" y="679.300" font-size="11.300" fill="#f4f4f4" text-anchor="middle" textLength="9.0" lengthAdjust="spacingAndGlyphs">24</text>
<text x="626.0" y="679.300" font-size="11.300" fill="#7f7fe0" text-anchor="middle" textLength="4.3" lengthAdjust="spacingAndGlyphs">1</text>
<text x="640.8" y="679.300" font-size="11.300" fill="#b9b9bc" text-anchor="middle" textLength="4.3" lengthAdjust="spacingAndGlyphs">2</text>
<text x="653.8" y="679.300" font-size="11.300" fill="#b9b9bc" text-anchor="middle" textLength="4.3" lengthAdjust="spacingAndGlyphs">3</text>
<text x="666.8" y="679.300" font-size="11.300" fill="#b9b9bc" text-anchor="middle" textLength="4.3" lengthAdjust="spacingAndGlyphs">4</text>
<text x="679.7" y="679.300" font-size="11.300" fill="#b9b9bc" text-anchor="middle" textLength="4.3" lengthAdjust="spacingAndGlyphs">5</text>
<text x="692.7" y="679.300" font-size="11.300" fill="#b9b9bc" text-anchor="middle" textLength="4.3" lengthAdjust="spacingAndGlyphs">6</text>
<text x="705.6" y="679.300" font-size="11.300" fill="#b9b9bc" text-anchor="middle" textLength="4.3" lengthAdjust="spacingAndGlyphs">7</text>
<text x="718.6" y="679.300" font-size="11.300" fill="#b9b9bc" text-anchor="middle" textLength="4.3" lengthAdjust="spacingAndGlyphs">8</text>
<text x="731.5" y="679.300" font-size="11.300" fill="#b9b9bc" text-anchor="middle" textLength="4.3" lengthAdjust="spacingAndGlyphs">9</text>
<text x="744.5" y="679.300" font-size="11.300" fill="#b9b9bc" text-anchor="middle" textLength="9.0" lengthAdjust="spacingAndGlyphs">10</text>
<text x="757.5" y="679.300" font-size="11.300" fill="#b9b9bc" text-anchor="middle" textLength="7.6" lengthAdjust="spacingAndGlyphs">11</text>
<text x="770.4" y="679.300" font-size="11.300" fill="#b9b9bc" text-anchor="middle" textLength="9.0" lengthAdjust="spacingAndGlyphs">12</text>
<text x="783.4" y="679.300" font-size="11.300" fill="#b9b9bc" text-anchor="middle" textLength="9.0" lengthAdjust="spacingAndGlyphs">13</text>
<text x="796.3" y="679.300" font-size="11.300" fill="#b9b9bc" text-anchor="middle" textLength="9.0" lengthAdjust="spacingAndGlyphs">14</text>
<text x="809.3" y="679.300" font-size="11.300" fill="#b9b9bc" text-anchor="middle" textLength="9.0" lengthAdjust="spacingAndGlyphs">15</text>
<text x="822.3" y="679.300" font-size="11.300" fill="#b9b9bc" text-anchor="middle" textLength="9.0" lengthAdjust="spacingAndGlyphs">16</text>
<text x="835.2" y="679.300" font-size="11.300" fill="#b9b9bc" text-anchor="middle" textLength="9.0" lengthAdjust="spacingAndGlyphs">17</text>
<text x="848.2" y="679.300" font-size="11.300" fill="#b9b9bc" text-anchor="middle" textLength="9.0" lengthAdjust="spacingAndGlyphs">18</text>
<text x="861.1" y="679.300" font-size="11.300" fill="#b9b9bc" text-anchor="middle" textLength="9.0" lengthAdjust="spacingAndGlyphs">19</text>
<text x="874.1" y="679.300" font-size="11.300" fill="#b9b9bc" text-anchor="middle" textLength="9.0" lengthAdjust="spacingAndGlyphs">20</text>
<text x="887.0" y="679.300" font-size="11.300" fill="#b9b9bc" text-anchor="middle" textLength="9.0" lengthAdjust="spacingAndGlyphs">21</text>
<text x="900.0" y="679.300" font-size="11.300" fill="#b9b9bc" text-anchor="middle" textLength="9.0" lengthAdjust="spacingAndGlyphs">22</text>
<text x="913.0" y="679.300" font-size="11.300" fill="#b9b9bc" text-anchor="middle" textLength="9.0" lengthAdjust="spacingAndGlyphs">23</text>
<text x="925.9" y="679.300" font-size="11.300" fill="#b9b9bc" text-anchor="middle" textLength="9.0" lengthAdjust="spacingAndGlyphs">24</text>
<text x="938.9" y="679.300" font-size="11.300" fill="#b9b9bc" text-anchor="middle" textLength="4.3" lengthAdjust="spacingAndGlyphs">1</text>
<text x="951.8" y="679.300" font-size="11.300" fill="#b9b9bc" text-anchor="middle" textLength="4.3" lengthAdjust="spacingAndGlyphs">2</text>
<text x="964.8" y="679.300" font-size="11.300" fill="#b9b9bc" text-anchor="middle" textLength="4.3" lengthAdjust="spacingAndGlyphs">3</text>
<text x="977.8" y="679.300" font-size="11.300" fill="#b9b9bc" text-anchor="middle" textLength="4.3" lengthAdjust="spacingAndGlyphs">4</text>
<text x="990.7" y="679.300" font-size="11.300" fill="#b9b9bc" text-anchor="middle" textLength="4.3" lengthAdjust="spacingAndGlyphs">5</text>
<text x="1003.7" y="679.300" font-size="11.300" fill="#b9b9bc" text-anchor="middle" textLength="4.3" lengthAdjust="spacingAndGlyphs">6</text>
<text x="1016.6" y="679.300" font-size="11.300" fill="#b9b9bc" text-anchor="middle" textLength="4.3" lengthAdjust="spacingAndGlyphs">7</text>
<text x="1029.6" y="679.300" font-size="11.300" fill="#b9b9bc" text-anchor="middle" textLength="4.3" lengthAdjust="spacingAndGlyphs">8</text>
<text x="1042.5" y="679.300" font-size="11.300" fill="#b9b9bc" text-anchor="middle" textLength="4.3" lengthAdjust="spacingAndGlyphs">9</text>
<text x="1055.5" y="679.300" font-size="11.300" fill="#b9b9bc" text-anchor="middle" textLength="9.0" lengthAdjust="spacingAndGlyphs">10</text>
<text x="1068.5" y="679.300" font-size="11.300" fill="#b9b9bc" text-anchor="middle" textLength="7.6" lengthAdjust="spacingAndGlyphs">11</text>
<text x="1081.4" y="679.300" font-size="11.300" fill="#b9b9bc" text-anchor="middle" textLength="9.0" lengthAdjust="spacingAndGlyphs">12</text>
<text x="1094.4" y="679.300" font-size="11.300" fill="#b9b9bc" text-anchor="middle" textLength="9.0" lengthAdjust="spacingAndGlyphs">13</text>
<text x="1107.3" y="679.300" font-size="11.300" fill="#b9b9bc" text-anchor="middle" textLength="9.0" lengthAdjust="spacingAndGlyphs">14</text>
<text x="1120.3" y="679.300" font-size="11.300" fill="#b9b9bc" text-anchor="middle" textLength="9.0" lengthAdjust="spacingAndGlyphs">15</text>
<text x="1133.3" y="679.300" font-size="11.300" fill="#b9b9bc" text-anchor="middle" textLength="9.0" lengthAdjust="spacingAndGlyphs">16</text>
<text x="1146.2" y="679.300" font-size="11.300" fill="#b9b9bc" text-anchor="middle" textLength="9.0" lengthAdjust="spacingAndGlyphs">17</text>
<text x="1159.2" y="679.300" font-size="11.300" fill="#b9b9bc" text-anchor="middle" textLength="9.0" lengthAdjust="spacingAndGlyphs">18</text>
<text x="1172.1" y="679.300" font-size="11.300" fill="#b9b9bc" text-anchor="middle" textLength="9.0" lengthAdjust="spacingAndGlyphs">19</text>
<text x="1185.1" y="679.300" font-size="11.300" fill="#b9b9bc" text-anchor="middle" textLength="9.0" lengthAdjust="spacingAndGlyphs">20</text>
<text x="1198.0" y="679.300" font-size="11.300" fill="#b9b9bc" text-anchor="middle" textLength="9.0" lengthAdjust="spacingAndGlyphs">21</text>
<text x="1211.0" y="679.300" font-size="11.300" fill="#b9b9bc" text-anchor="middle" textLength="9.0" lengthAdjust="spacingAndGlyphs">22</text>
<text x="1224.0" y="679.300" font-size="11.300" fill="#b9b9bc" text-anchor="middle" textLength="9.0" lengthAdjust="spacingAndGlyphs">23</text>
<text x="1236.9" y="679.300" font-size="11.300" fill="#b9b9bc" text-anchor="middle" textLength="9.0" lengthAdjust="spacingAndGlyphs">24</text>
<text x="1249.9" y="679.300" font-size="11.300" fill="#b9b9bc" text-anchor="middle" textLength="4.3" lengthAdjust="spacingAndGlyphs">1</text>
<text x="1262.8" y="679.300" font-size="11.300" fill="#b9b9bc" text-anchor="middle" textLength="4.3" lengthAdjust="spacingAndGlyphs">2</text>
<text x="1275.8" y="679.300" font-size="11.300" fill="#b9b9bc" text-anchor="middle" textLength="4.3" lengthAdjust="spacingAndGlyphs">3</text>
<text x="1288.8" y="679.300" font-size="11.300" fill="#b9b9bc" text-anchor="middle" textLength="4.3" lengthAdjust="spacingAndGlyphs">4</text>
<text x="1301.7" y="679.300" font-size="11.300" fill="#b9b9bc" text-anchor="middle" textLength="4.3" lengthAdjust="spacingAndGlyphs">5</text>
<text x="316" y="669.400" font-size="11.300" fill="#f4f4f4" text-anchor="middle" textLength="4.3" lengthAdjust="spacingAndGlyphs">0</text>
<text x="626" y="669.400" font-size="11.300" fill="#7f7fe0" text-anchor="middle" textLength="4.3" lengthAdjust="spacingAndGlyphs">1</text>
<text x="938.5" y="669.400" font-size="11.300" fill="#b9b9bc" text-anchor="middle" textLength="4.6" lengthAdjust="spacingAndGlyphs">2</text>
<text x="1249.5" y="669.400" font-size="11.300" fill="#b9b9bc" text-anchor="middle" textLength="4.6" lengthAdjust="spacingAndGlyphs">3</text>
<text x="584.5" y="669.3" font-size="10" font-weight="700" fill="#ffffff" textLength="24" lengthAdjust="spacingAndGlyphs">0+22</text>
<rect x="311.700" y="705" width="55.300" height="41.500" fill="#fff"/>
<rect x="311.700" y="797.500" width="55.300" height="41.500" fill="#fff"/>
<text x="312" y="763" font-size="10" font-weight="700" fill="#fafafa" textLength="17.5" lengthAdjust="spacingAndGlyphs" letter-spacing="0.8">001</text>
<text x="312" y="860" font-size="10" font-weight="400" fill="#f0f0f0" textLength="15" lengthAdjust="spacingAndGlyphs">001</text>
<rect x="138" y="856.3" width="1146" height="10" fill="#6b6c70"/>
<rect x="138" y="856" width="1157" height="1.3" fill="#4a4b4e"/>
<rect x="138" y="862.5" width="1146" height="3.5" fill="#808184"/>
</g>
<rect x="1283.500" y="681.5" width="11" height="185" fill="#6a6b6f"/>
<rect x="1283.300" y="681.5" width="1" height="185" fill="#505154"/>
<rect x="1284.500" y="693.500" width="8" height="104" rx="1.5" fill="#808185" stroke="#58595c" stroke-width=".8"/>
<path d="M1286.500,741.5 h4 M1286.500,743.500 h4 M1286.500,745.5 h4" stroke="#4a4a4d" stroke-width=".8"/>
<rect x="1284.500" y="682.5" width="8" height="9" rx="1" fill="#7c7d81" stroke="#58595c" stroke-width=".8"/>
<path d="M1286.300,688.500 h4.400 l-2.200,-3 z" fill="#38383b"/>
<rect x="1284.500" y="846" width="8" height="9" rx="1" fill="#7c7d81" stroke="#58595c" stroke-width=".8"/>
<path d="M1286.300,849 h4.400 l-2.200,3 z" fill="#38383b"/>
</svg>
<svg width="21" height="12" style="left:1137px;top:644px;font-family:'Liberation Sans',sans-serif"><text x="0" y="9.5" font-size="9.5" fill="#f0f0f0" textLength="21" lengthAdjust="spacingAndGlyphs">0+22</text></svg>
<svg width="15" height="12" style="left:1199.5px;top:644px;font-family:'Liberation Sans',sans-serif"><text x="0" y="9.5" font-size="9.5" fill="#f0f0f0" textLength="15" lengthAdjust="spacingAndGlyphs">0+1</text></svg>
<svg width="21" height="12" style="left:1257.5px;top:644px;font-family:'Liberation Sans',sans-serif"><text x="0" y="9.5" font-size="9.5" fill="#f0f0f0" textLength="21" lengthAdjust="spacingAndGlyphs">0+24</text></svg>
<svg width="8" height="12" style="left:1174px;top:644px"><path d="M1,10 L6,1.500" stroke="#f0f0f0" stroke-width="1.100"/></svg>
<svg width="8" height="12" style="left:1234px;top:644px"><path d="M1,10 L6,1.500" stroke="#f0f0f0" stroke-width="1.100"/></svg>
<svg width="56" height="42" viewBox="0 0 56 42" style="left:36px;top:705.3px;overflow:hidden"><g transform="scale(0.0733) translate(-273 -28)"><use href="#hairp" fill="#6a423d"/></g></svg>
<svg width="56" height="42" viewBox="0 0 56 42" style="left:36px;top:798px;overflow:hidden"><g transform="scale(0.0733) translate(-273 -28)"><use href="#headmini"/></g></svg>
<svg width="56" height="42" viewBox="0 0 56 42" style="left:312.2px;top:705.2px;overflow:hidden"><g transform="scale(0.0733) translate(-273 -28)"><use href="#hairp" fill="#6a423d"/></g></svg>
<svg width="56" height="42" viewBox="0 0 56 42" style="left:312.2px;top:797.7px;overflow:hidden"><g transform="scale(0.0733) translate(-273 -28)"><use href="#headmini"/></g></svg>
<div class="a" style="left:276px;top:669px;width:123.5px;height:18px;border-radius:3px;background:linear-gradient(#ffffff,#f4f4fa 50%,#e6e6f2);box-shadow:1px 1.5px 2px rgba(0,0,0,.55),0 0 0 .5px rgba(120,120,130,.6)"></div>
<div class="t" id="tip" style="left:280px;top:671.5px;font-size:11.5px;letter-spacing:-1.18px;color:#505052">新規アニメーションセル</div>
<svg width="30" height="50" viewBox="0 0 30 50" style="left:258.300px;top:593px"><path d="M7.300,34.100 L13.400,38.100 V5.300 H16.700 V38.100 L22.900,34.100 L15,43.600 Z" fill="#fff" stroke="#fff" stroke-width="6.600" stroke-linejoin="round"/><path d="M7.300,34.100 L13.400,38.100 V5.300 H16.700 V38.100 L22.900,34.100 L15,43.600 Z" fill="#8c3a3d"/></svg>
<svg width="10" height="9" style="left:4.500px;top:627px"><path d="M0,1.500 h7 M0,4.300 h7 M0,7.100 h7" stroke="#505052" stroke-width="1.100"/></svg>
<svg width="12" height="8" style="left:2px;top:836px"><path d="M0,0.300 L6,3.800 L12,0.300 L12,2.800 L6,7.300 L0,2.800 Z" fill="#8f8f91"/></svg>
<svg width="12" height="13" style="left:2px;top:853.5px"><path d="M0,0.300 L6,3.500 L12,0.300 L12,2.500 L6,6.800 L0,2.500 Z M0,5.300 L6,8.500 L12,5.300 L12,7.500 L6,11.800 L0,7.500 Z" fill="#8f8f91"/></svg>
<svg width="12" height="10" style="left:19.5px;top:626px"><path d="M1,1 L4.200,4.500 L1,8 Z" fill="#8a8a8c"/><path d="M5.500,1.500 h5 M5.500,4.500 h5 M5.500,7.500 h5" stroke="#8a8a8c" stroke-width="1.100"/></svg>
<!-- ===== timeline toolbar icons ===== -->
<svg id="tbi" width="460" height="40" viewBox="0 620 460 40" style="left:0;top:620px">
  <defs>
    <linearGradient id="gSil" x1="0" x2="1" y1="0" y2="0"><stop offset="0" stop-color="#fff"/><stop offset=".25" stop-color="#b9b9bd"/><stop offset=".5" stop-color="#f4f4f6"/><stop offset=".75" stop-color="#c4c4c8"/><stop offset="1" stop-color="#ececee"/></linearGradient>
    <linearGradient id="gCel" x1="0" x2="0" y1="0" y2="1"><stop offset="0" stop-color="#f6f6f7"/><stop offset="1" stop-color="#c9c9cd"/></linearGradient>
    <linearGradient id="gLT" x1="0" x2="1" y1="0" y2="1"><stop offset="0" stop-color="#d8d8da"/><stop offset="1" stop-color="#858689"/></linearGradient>
    <linearGradient id="gPap" x1="0" x2="1" y1="0" y2="1"><stop offset="0" stop-color="#ffffff"/><stop offset=".55" stop-color="#f0f0f0"/><stop offset="1" stop-color="#8f8f92"/></linearGradient>
  </defs>
  <!-- tab icon -->
  <g transform="translate(0 1.200)">
    <rect x="37.500" y="627.500" width="12.500" height="9" fill="url(#gSil)" stroke="#2d2d2f" stroke-width="1"/>
    <path d="M39.500,628 v8" stroke="#8a4a4a" stroke-width=".7"/><path d="M41.500,628 v8 M43.500,628 v8 M45.300,628 v8" stroke="#77777b" stroke-width=".6"/>
    <rect x="47" y="629.600" width="1.600" height="1.600" fill="#24249a"/><rect x="47" y="633.300" width="1.600" height="1.600" fill="#24249a"/>
  </g>
  <!-- graph editor (disabled) -->
  <g fill="none" stroke="#8b8c90" stroke-width="1">
    <path d="M20.500,650 h9 M20.500,652.500 h9 M20.500,655 h9 M23,647 v8 M26,647 v8 M29,647 v8" stroke-width=".7" opacity=".8"/>
    <path d="M19,654 V650.500 C19,645.500 24.500,645.500 24.500,650 C24.500,654.500 30.500,654.500 30.500,650 V646"/>
  </g>
  <!-- timeline icon -->
  <g>
    <rect x="44.700" y="646.300" width="12.800" height="9" fill="url(#gSil)" stroke="#2b2b2d" stroke-width="1.100"/>
    <path d="M46.700,647 v8" stroke="#8a4a4a" stroke-width=".8"/><path d="M48.700,647 v8 M50.600,647 v8 M52.400,647 v8" stroke="#707074" stroke-width=".6"/>
    <rect x="54.200" y="648.500" width="1.700" height="1.700" fill="#24249a"/><rect x="54.200" y="652.200" width="1.700" height="1.700" fill="#24249a"/>
  </g>
  <!-- new timeline icon -->
  <g>
    <rect x="63.700" y="647" width="11" height="8.500" fill="url(#gSil)" stroke="#2b2b2d" stroke-width="1.100"/>
    <path d="M65.600,647.500 v7.500" stroke="#8a4a4a" stroke-width=".8"/><path d="M67.500,647.500 v7.500 M69.300,647.500 v7.500" stroke="#707074" stroke-width=".6"/>
    <rect x="71.400" y="649" width="1.600" height="1.600" fill="#24249a"/><rect x="71.400" y="652.400" width="1.600" height="1.600" fill="#24249a"/>
    <path d="M63.200,643.700 v5 M60.800,646.200 h4.800 M61.500,644.500 l3.400,3.400 M64.900,644.500 l-3.400,3.400" stroke="#1e1e20" stroke-width=".8"/>
  </g>
  <!-- zoom out / in -->
  <g>
    <path d="M96.200,653.200 L99.300,656.800" stroke="#2a2a2c" stroke-width="2.200" stroke-linecap="round"/>
    <circle cx="93.200" cy="649.800" r="4.700" fill="#f6f6f6" stroke="#a9a9ac" stroke-width=".9"/>
    <path d="M90.200,649.900 h6" stroke="#232325" stroke-width="2"/>
    <path d="M113.800,653.200 L116.900,656.800" stroke="#2a2a2c" stroke-width="2.200" stroke-linecap="round"/>
    <circle cx="110.800" cy="649.800" r="4.700" fill="#f6f6f6" stroke="#a9a9ac" stroke-width=".9"/>
    <path d="M107.800,649.900 h6 M110.800,646.900 v6" stroke="#232325" stroke-width="1.800"/>
  </g>
  <!-- transport -->
  <g fill="#2c2c2e">
    <rect x="133" y="645.500" width="1.700" height="10"/><path d="M141.600,645.500 V655.500 L134.900,650.500 Z"/>
    <path d="M147.800,650.500 L155,645 V648 H159.700 V653 H155 V656 Z"/>
    <path d="M167.200,645.500 V655.600 L176.400,650.500 Z"/>
    <path d="M195.500,650.500 L188.300,645 V648 H184 V653 H188.300 V656 Z"/>
    <path d="M201.800,645.500 V655.500 L208.700,650.500 Z"/><rect x="208.900" y="645.500" width="1.700" height="10"/>
  </g>
  <!-- loop button -->
  <rect x="224.300" y="642.500" width="16.400" height="16" rx="1.500" fill="#66676b" stroke="#6f7074" stroke-width=".8"/>
  <g fill="none" stroke="#2a2a2c" stroke-width="1.700">
    <path d="M228.300,650 V648.600 Q228.300,647 230,647 H234.200"/>
    <path d="M236.900,651 V652.600 Q236.900,654.200 235.200,654.200 H231"/>
  </g>
  <path d="M233.700,644.300 L237.600,647 L233.700,649.700 Z M231.500,651.500 L227.600,654.200 L231.500,656.900 Z" fill="#2a2a2c"/>
  <!-- animation folder icon -->
  <g>
    <path d="M250.800,647.500 V656.300 H262.300" fill="none" stroke="#2c2c2e" stroke-width="1"/>
    <rect x="252.6" y="645.4" width="11.8" height="9.8" fill="url(#gCel)" stroke="#2b2b2d" stroke-width="1"/><rect x="253.1" y="645.9" width="10.8" height="2" fill="#fafafa"/><path d="M256.5,645.9 v1.700 M260.5,645.9 v1.700" stroke="#3a3a3c" stroke-width="1"/><rect x="254.1" y="648.4" width="8.8" height="5.2" fill="#e4e6e6" stroke="#e77fd0" stroke-width=".8"/>
  </g>
  <!-- new animation cel (highlighted) -->
  <rect x="267.700" y="642.600" width="15.400" height="16" rx="1.500" fill="#7e7f83" stroke="#66676b" stroke-width=".9"/>
  <g>
    <rect x="269.8" y="646.5" width="11.8" height="9.8" fill="url(#gCel)" stroke="#2b2b2d" stroke-width="1"/><rect x="270.3" y="647.0" width="10.8" height="2" fill="#fafafa"/><path d="M273.7,647.0 v1.700 M277.7,647.0 v1.700" stroke="#3a3a3c" stroke-width="1"/><rect x="271.3" y="649.5" width="8.8" height="5.2" fill="#e4e6e6" stroke="#e77fd0" stroke-width=".8"/>
    <path d="M270.400,642.800 v4 M268.400,644.800 h4 M269,643.400 l2.800,2.800 M271.800,643.400 l-2.800,2.800" stroke="#1e1e20" stroke-width=".8"/>
  </g>
  <!-- cel with link -->
  <g>
    <rect x="286.5" y="646" width="11.8" height="9.8" fill="url(#gCel)" stroke="#2b2b2d" stroke-width="1"/><rect x="287.0" y="646.5" width="10.8" height="2" fill="#fafafa"/><path d="M290.4,646.5 v1.700 M294.4,646.5 v1.700" stroke="#3a3a3c" stroke-width="1"/><rect x="288.0" y="649.0" width="8.8" height="5.2" fill="#e4e6e6" stroke="#e77fd0" stroke-width=".8"/>
    <g fill="none"><rect x="292.600" y="652.700" width="7.400" height="4" rx="2" stroke="#1f1f21" stroke-width="2.600"/><rect x="292.600" y="652.700" width="7.400" height="4" rx="2" stroke="#f4f4f4" stroke-width="1.100"/><path d="M294.800,654.700 h3" stroke="#1f1f21" stroke-width="2.400"/><path d="M294.600,654.700 h3.400" stroke="#f4f4f4" stroke-width="1"/></g>
  </g>
  <!-- disabled cel-unlink -->
  <g opacity=".75">
    <rect x="304" y="646.300" width="10.800" height="9" fill="#85868a" stroke="#6a6b6f" stroke-width="1"/>
    <path d="M304,648.800 h10.800 M307.500,646.500 v9 M311,646.500 v9" stroke="#6d6e72" stroke-width=".8"/>
    <rect x="309.500" y="652.300" width="7.600" height="4" rx="2" fill="none" stroke="#6a6b6f" stroke-width="1.300"/>
    <path d="M310,651 l6.500,6" stroke="#8e8f93" stroke-width="1"/>
  </g>
  <!-- light table icon -->
  <g>
    <rect x="332.300" y="647.300" width="10" height="10" fill="none" stroke="#4a4a4d" stroke-width="1" stroke-dasharray="1.300 1"/>
    <rect x="329.800" y="644.600" width="9.800" height="10" fill="#fff"/><rect x="331.300" y="646.200" width="7" height="7.200" fill="url(#gLT)"/>
    <rect x="329.300" y="644.100" width="10.800" height="11" fill="none" stroke="#f7f7f7" stroke-width="1.300"/>
    <path d="M329,655.700 H340.700 V644.500" fill="none" stroke="#29292b" stroke-width="1"/>
  </g>
  <!-- disabled keyframe tools -->
  <g fill="none" stroke="#67686c" stroke-width="1.100">
    <path d="M362,645.300 L367.500,650.700 L362,656.200 L356.500,650.700 Z"/>
    <path d="M362,647.800 L365,650.700 L362,653.700 L359,650.700 Z" stroke-width=".9"/>
    <path d="M356.500,645.500 L367.500,656.200" stroke-width="1.200"/>
    <path d="M355.800,644.800 l1.600,0 M367,656.800 l1.300,-1.300" stroke-width="1.400"/>
  </g>
  <path d="M373,649.200 H381 L377,653.300 Z" fill="#68696d"/>
  <g>
    <path d="M392.800,644.800 L398.700,650.600 L392.800,656.500 L386.900,650.600 Z" fill="#828387" stroke="#8e8f93" stroke-width="1"/>
    <path d="M392.800,647.600 L395.800,650.600 L392.800,653.700 L389.800,650.600 Z" fill="#8f9094"/>
  </g>
  <!-- paper with speed lines -->
  <g>
    <path d="M410,646.500 h7 M410.500,649 h7 M410,651.600 h6.500 M409.500,654.200 h6" stroke="#19191b" stroke-width="1.300"/>
    <path d="M406,646 H412.700 L411.200,655.300 H404.500 Z" fill="url(#gPap)" stroke="#1c1c1e" stroke-width="1"/>
    <path d="M404.300,655.500 h7" stroke="#111" stroke-width="1.300"/>
  </g>
  <!-- disabled pencil -->
  <g fill="none" stroke="#8c8d91" stroke-width="1">
    <path d="M424.500,654 L429.500,645.800 L431,646.800 L426,655 Z"/>
    <path d="M423,656.200 h8.500"/>
  </g>
</svg>
<!-- ===== right dock borders + tool palette ===== -->
<div class="a" style="left:1292px;top:0;width:5.500px;height:621px;background:#59595b"></div>
<div class="a" style="left:1295.2px;top:620px;width:2.300px;height:247px;background:#59595b"></div>
<div class="a" style="left:1297.3px;top:0;width:1px;height:866px;background:#454547"></div>
<div class="a" style="left:1298.3px;top:0;width:35.700px;height:866px;background:#797a7e"></div>
<div class="a" style="left:1334px;top:0;width:12px;height:866px;background:#5c5c5d"></div>
<div class="a" style="left:1295.500px;top:0;width:38.500px;height:14.500px;background:#797a7e"></div>
<div class="a" style="left:1296.5px;top:0;width:15.5px;height:9.5px;background:linear-gradient(#5f6063,#545558)"></div>
<div class="a" style="left:1324.600px;top:0;width:8.800px;height:9px;background:linear-gradient(#808185,#6a6b6f);border:1px solid #5a5b5e;border-top:0"></div>
<div class="a" style="left:1295.500px;top:10px;width:38.500px;height:4.500px;background:#828387"></div>
<!-- tool boxes -->
<div class="a" style="left:1299.300px;top:14.5px;width:33.300px;height:25px;background:#7a7b7f;border:1.2px solid #525356"></div>
<div class="a" style="left:1299.300px;top:40.5px;width:33.300px;height:159.5px;background:#7a7b7f;border:1.2px solid #525356"></div>
<div class="a" style="left:1299.300px;top:200px;width:33.300px;height:160px;background:#7a7b7f;border:1.2px solid #525356"></div>
<div class="a" style="left:1299.300px;top:360px;width:33.300px;height:135px;background:#7a7b7f;border:1.2px solid #525356;border-bottom:0"></div>
<div class="a" style="left:1298.300px;top:494.8px;width:35.700px;height:371.200px;background:#797a7e"></div>
<svg id="tools" width="40" height="545" viewBox="1295 0 40 545" style="left:1295px;top:0">
  <defs>
    <linearGradient id="tgw" x1="0" x2="0" y1="0" y2="1"><stop offset="0" stop-color="#fff"/><stop offset="1" stop-color="#c6c6c9"/></linearGradient>
    <linearGradient id="tgd" x1="0" x2="1" y1="0" y2="0"><stop offset="0" stop-color="#101012"/><stop offset=".45" stop-color="#7d8b92"/><stop offset=".7" stop-color="#fff"/></linearGradient>
    <linearGradient id="tgd2" x1="0" x2="1" y1="0" y2="0"><stop offset="0" stop-color="#0c0c0e"/><stop offset=".45" stop-color="#39444a"/><stop offset="1" stop-color="#e9eef0"/></linearGradient>
    <linearGradient id="tgg" x1="0" x2="1" y1="0" y2="1"><stop offset="0" stop-color="#fff"/><stop offset=".5" stop-color="#4a4040"/><stop offset="1" stop-color="#050505"/></linearGradient>
    <linearGradient id="tgc" x1="0" x2="0" y1="0" y2="1"><stop offset="0" stop-color="#56575b"/><stop offset=".6" stop-color="#a9aaad"/><stop offset=".85" stop-color="#f2f2f3"/><stop offset="1" stop-color="#ffffff"/></linearGradient>
  </defs>
  <!-- tab menu glyph -->
  <path d="M1300.500,1 L1303.800,4.200 L1300.500,7.500 Z" fill="#7d7e82"/><path d="M1304.800,1.500 h4.500 M1304.800,4.300 h4.500 M1304.800,7 h4.500" stroke="#7d7e82" stroke-width="1.200"/>
  <!-- pen tab icon -->
  <path d="M1322.300,0 C1321,4 1320.600,8 1321.600,12" stroke="#e9e9ea" stroke-width="1.700" fill="none"/><path d="M1320.300,0 C1319.600,4 1319.800,8 1321.200,12" stroke="#2a2a2c" stroke-width=".8" fill="none"/><rect x="1320.200" y="12" width="2.800" height="1.800" fill="#111"/>
  <path d="M1327,3.200 h4.600 l-2.300,2.800 z" fill="#38383a"/>
  <!-- magnifier -->
  <path d="M1318.700,29.800 L1322.300,34" stroke="#1f1f21" stroke-width="2" stroke-linecap="round"/>
  <circle cx="1315" cy="25" r="5.300" fill="#fafafa" stroke="#77787b" stroke-width="1"/><path d="M1311.500,26 l3.500,-1.700 l-0.600,3 z" fill="#4a4a4c"/>
  <!-- hand -->
  <path d="M1311.500,59.700 C1311,56.500 1309.600,54.800 1308.600,53.400 L1310.300,52.300 L1312.500,54 L1311.300,47 L1313.200,46.300 L1314.800,51.500 L1315.300,44.300 L1317.300,44.300 L1317.500,51.500 L1319.800,46 L1321.500,46.800 L1320,52.800 L1322.600,50.800 L1323.600,52.300 C1321.500,54.600 1320.800,56.500 1320.600,59.700 Z" fill="#fff"/>
  <!-- lasso -->
  <ellipse cx="1316.300" cy="73" rx="8.200" ry="4.500" transform="rotate(-9 1316.300 73)" fill="none" stroke="#2a2a2c" stroke-width="1.200"/>
  <path d="M1309.500,76.800 l1.500,1.600 l-1.800,1.300 l-0.500,-1.700 z" fill="none" stroke="#2a2a2c" stroke-width=".9"/>
  <!-- move -->
  <path d="M1307.700,88.300 L1316,92 L1313.300,93.200 L1312.200,96.300 Z" fill="#252527"/>
  <path d="M1318,91.500 L1320,94.300 H1318.700 V96.800 H1321.500 V95.600 L1324.300,97.600 L1321.500,99.600 V98.300 H1318.700 V101.300 H1320 L1318,104 L1316,101.300 H1317.300 V98.300 H1314.500 V99.600 L1311.800,97.600 L1314.500,95.600 V96.800 H1317.300 V94.300 H1316 Z" fill="#252527"/>
  <!-- wand -->
  <path d="M1317,118 L1324,126.500" stroke="#e8e8e8" stroke-width="1.500"/><path d="M1317.600,117.400 L1324.600,126" stroke="#3a3a3c" stroke-width=".7"/>
  <path d="M1316,109.800 L1317,115 L1322,113 L1318.300,116.800 L1323,118.300 L1318,119 L1319.800,123.500 L1316,120 L1313,124 L1313.800,119 L1308.700,118.800 L1313.300,116.500 L1310,112.500 L1314.600,114.800 Z" fill="#2a2a2c"/><circle cx="1316" cy="117.300" r="2.300" fill="#f4f4f4"/>
  <!-- eyedropper -->
  <circle cx="1319.200" cy="135" r="1.800" fill="#3a3a3c"/><path d="M1318.800,136 L1316.800,140" stroke="#1f1f21" stroke-width="3"/><path d="M1315,139 l4,2" stroke="#1f1f21" stroke-width="1.500"/>
  <path d="M1316.500,141 L1312.300,149.700" stroke="#1f1f21" stroke-width="2.200"/><path d="M1316.200,141.800 L1314,146.400" stroke="#e4e4e4" stroke-width=".9"/>
  <!-- eraser-ish white block -->
  <path d="M1311.200,157.800 L1315.800,157 L1322.800,167.600 L1322.200,170 L1317.300,170.800 L1310.500,160.300 Z" fill="url(#tgw)" stroke="#e6e6e6" stroke-width=".6"/><path d="M1317.300,170.800 L1316.800,168.300 L1322.800,167.600" fill="none" stroke="#9a9a9d" stroke-width=".6"/>
  <!-- brush -->
  <path d="M1310.200,189.500 C1312,193.500 1319,195 1324.500,194 C1320,193.500 1316.500,191 1316.500,188.800 Z" fill="#9fd2f2"/><ellipse cx="1313.200" cy="191.600" rx="2.400" ry="1.400" fill="#58a9e0"/>
  <path d="M1322.200,180.300 L1315.500,188" stroke="#3c3c3e" stroke-width="2.600"/><path d="M1321.900,180.600 L1315.900,187.500" stroke="#c9c9cb" stroke-width="1.200"/>
  <path d="M1313,187 L1316.800,190.500 L1313.800,191.500 L1311.500,189.500 Z" fill="#fff"/>
  <!-- eraser 2 -->
  <path d="M1312.500,205 L1322.500,204.300 L1323,207.500 L1319.800,213.500 L1309.600,214 L1310.300,211 Z" fill="#9c9da0" stroke="#4a4a4c" stroke-width=".6"/>
  <path d="M1309.600,213 L1319.800,212.600 L1319.500,217.500 L1310,218 Z" fill="url(#tgw)" stroke="#e0e0e0" stroke-width=".5"/><path d="M1319.800,212.800 L1323,207.500 L1322.300,212.500 L1319.500,217.500 Z" fill="#3a3a3c"/>
  <!-- pen nib -->
  <circle cx="1313" cy="228.500" r="2.700" fill="#7d7e82" stroke="#3a3a3c" stroke-width=".7"/>
  <path d="M1313,231.200 L1316.600,229.800 L1320.800,236.500 L1321,241 L1316.600,238.500 Z" fill="#ececec" stroke="#222" stroke-width=".9"/><path d="M1317,234.500 L1321,241" stroke="#222" stroke-width=".9"/>
  <!-- bucket cube -->
  <path d="M1308.500,251.500 L1311.500,249 L1320.500,249.300 L1318.300,251.800 Z" fill="#dcdcde" stroke="#4a4a4c" stroke-width=".6"/>
  <rect x="1308.300" y="251.600" width="10" height="9.600" fill="#f7f7f7" stroke="#d0d0d2" stroke-width=".5"/><path d="M1318.300,251.800 L1320.500,249.300 V258.500 L1318.300,261.200 Z" fill="#b7b7ba"/><path d="M1309.500,259.500 L1314,255 L1318,253" stroke="#c9c9cc" stroke-width=".8" fill="none"/>
  <path d="M1318.800,257.300 C1321.500,258.500 1323.300,261 1323,264.300 C1320.500,264 1318.800,261.500 1318.800,257.300 Z" fill="#1c1c1e" stroke="#f4f4f4" stroke-width=".9"/>
  <!-- airbrush -->
  <path d="M1316.500,279 L1323.500,274.500 V283.500 Z" fill="#a7a8ab"/><path d="M1316,279 L1324,271 M1316,279 L1324,284" stroke="#2f2f31" stroke-width=".8"/>
  <rect x="1312.200" y="274.200" width="2.600" height="5" fill="#3f3f41"/>
  <path d="M1308.500,283.500 C1309.500,280.500 1318.500,280.500 1319.500,283.500 V287.500 H1308.500 Z" fill="url(#tgw)" stroke="#3f3f41" stroke-width=".6"/><path d="M1308.500,284.700 h11" stroke="#4a4a4c" stroke-width="1"/>
  <!-- blend drops -->
  <path d="M1320.300,293.800 C1322,298 1325.200,300.500 1324.600,303.800 C1324,307.600 1316.600,307.900 1315.600,304.300 C1314.800,301 1318.300,298.300 1320.300,293.800 Z" fill="#fdfdfd"/>
  <path d="M1312.700,293.800 C1314.500,298 1317.800,300.500 1317.200,303.800 C1316.600,307.600 1309,307.900 1308.100,304.300 C1307.300,301 1310.700,298.300 1312.700,293.800 Z" fill="url(#tgd2)"/>
  <!-- sparkle -->
  <path d="M1314.100,316 L1314.900,320.800 L1319.500,321.700 L1314.900,322.600 L1314.100,327.500 L1313.300,322.600 L1308.600,321.700 L1313.300,320.800 Z" fill="#303032"/>
  <path d="M1319.400,324 L1319.900,326.800 L1322.800,327.400 L1319.900,328 L1319.400,331 L1318.900,328 L1316,327.400 L1318.900,326.800 Z" fill="#303032"/>
  <!-- selected decoration tool -->
  <rect x="1305.300" y="335.300" width="21" height="20.800" rx="1.700" fill="#6a8b9f" stroke="#7a9bb0" stroke-width=".8"/>
  <path d="M1316.800,338 C1318.500,339 1318.300,340.300 1317.500,340.800 C1320.500,341 1322.300,342.300 1321.800,343.800 C1323.500,345 1323.700,347.300 1322.300,348.500 C1323.300,349.800 1323,351.200 1322,351.800 H1310.300 C1309,350.800 1309,348.800 1310.300,347.800 C1309.700,346 1310.800,344.300 1312.500,343.800 C1312.300,342 1313.700,340.700 1315.700,340.600 C1316.300,339.800 1316.600,339 1316.800,338 Z" fill="#5ce4f2"/>
  <path d="M1312.500,343.800 C1315,344.800 1319,344.800 1321.800,343.800 M1310.300,347.800 C1314,349 1319,349 1322.300,348.500" stroke="#33c6da" stroke-width=".7" fill="none"/>
  <path d="M1310.300,351.300 C1314,352.300 1318.500,352 1322.300,350.700 L1322.300,353.200 C1318.500,354.500 1314,354.700 1310.300,353.800 Z" fill="#f2e312"/>
  <!-- gradient -->
  <rect x="1309.500" y="364.600" width="13" height="12.800" fill="url(#tgg)" stroke="#2a2a2c" stroke-width=".9"/>
  <!-- curve fin -->
  <path d="M1309.700,399.700 C1310,392.500 1315,387.500 1322.800,387 C1321.800,390.500 1321.800,394 1322.300,397 C1317.500,396.800 1313,397.800 1309.700,399.700 Z" fill="url(#tgc)"/>
  <!-- rectangle -->
  <rect x="1308.800" y="412.600" width="14.800" height="8.500" fill="none" stroke="#2d2d2f" stroke-width="1.300"/>
  <!-- A -->
  <text x="1316" y="446.400" font-family="'Liberation Serif',serif" font-size="23" font-weight="700" fill="#222224" text-anchor="middle" textLength="15.500" lengthAdjust="spacingAndGlyphs">A</text>
  <!-- balloon -->
  <path d="M1316.500,466 L1320.800,468.800 L1319.300,465 Z" fill="#f2f2f2"/><ellipse cx="1316.200" cy="460" rx="7.500" ry="6" fill="#fbfbfb"/><path d="M1310,463 C1313,466.500 1319,466.800 1322.500,463.500" stroke="#cfcfd2" stroke-width=".8" fill="none"/>
  <!-- dustpan -->
  <path d="M1320.300,474.300 L1321.800,474.900 L1320.300,480.800 L1318.800,480.400 Z" fill="#a8a9ac" stroke="#55565a" stroke-width=".5"/>
  <path d="M1312.500,479.300 L1323.500,482.800 L1319.800,491.800 L1308,487.300 Z" fill="#a2a3a6" stroke="#58595c" stroke-width=".7"/><path d="M1311.300,481.800 L1322.600,485.500" stroke="#6a6b6e" stroke-width="1"/>
  <!-- colour swatches -->
  <rect x="1312.700" y="509" width="19.500" height="19" fill="#fff" stroke="#58595c" stroke-width=".7"/>
  <rect x="1300.300" y="497" width="19.300" height="19.300" fill="#6ec2ea"/>
  <rect x="1301.700" y="498.400" width="16.500" height="16.500" fill="#141414"/>
  <rect x="1302.700" y="499.400" width="14.500" height="14.500" fill="#f0e6e4"/>
  <rect x="1303.500" y="500.200" width="12.900" height="12.900" fill="#6a423d"/>
  <!-- transparent checker -->
  <g>
    <rect x="1300.300" y="530.600" width="31.800" height="8" fill="#fff" stroke="#58595c" stroke-width=".7"/>
    <path d="M1304.300,530.800 h4 v4 h-4 z M1312.300,530.800 h4 v4 h-4 z M1320.300,530.800 h4 v4 h-4 z M1328.300,530.800 h3.600 v4 h-3.600 z M1300.500,534.800 h3.800 v3.700 h-3.800 z M1308.300,534.800 h4 v3.700 h-4 z M1316.300,534.800 h4 v3.700 h-4 z M1324.300,534.800 h4 v3.700 h-4 z" fill="#808184"/>
  </g>
</svg>
<!-- ===== right panels ===== -->
<div class="a" style="left:1346.5px;top:0;width:153.5px;height:866px;background:#7a7b7f"></div>
<div class="a" style="left:1346.500px;top:0;width:1px;height:866px;background:#86878a"></div>
<div class="a" style="left:1347.5px;top:0;width:151.300px;height:10px;background:linear-gradient(#565657,#4a4a4b)"></div>
<div class="a" style="left:1347.5px;top:0;width:15.5px;height:9.5px;background:linear-gradient(#606164,#545558)"></div>
<div class="a" style="left:1364.5px;top:0;width:99px;height:10.500px;background:#7a7b7f"></div>
<div class="t" style="left:1386.5px;top:0.800px;font-size:9px;letter-spacing:-0.700px;color:#d6d6d9">レイヤープロパティ</div>
<div class="a" style="left:1347.5px;top:15px;width:151.300px;height:202px;border:1.2px solid #5a5b5e;background:#7a7b7f"></div>
<div class="a" style="left:1488.3px;top:16px;width:9.800px;height:200px;background:#6b6c70;border-top:1.300px solid #4e4f52;border-left:1px solid #626367"></div>
<div class="a" style="left:1489.3px;top:212.500px;width:8.800px;height:3.500px;background:linear-gradient(#8d8e91,#77787c)"></div>
<div class="a" style="left:1498.800px;top:0;width:1.200px;height:866px;background:#77787c"></div>
<div class="a" style="left:1352px;top:22.3px;width:132px;height:1px;background:#86878b"></div>
<div class="t" style="left:1354.5px;top:17.5px;font-size:10.5px;letter-spacing:-0.5px;color:#f0f0f0;background:#7a7b7f;padding:0 1.5px">効果</div>
<div class="a" style="left:1411.5px;top:29.3px;width:73.5px;height:17.2px;border:1px solid #5c5d60;border-radius:2.5px;background:linear-gradient(#7b7c80,#66676b);box-shadow:inset 0 1px 0 #8d8e91"></div>
<svg width="76" height="18" viewBox="1411 29 76 18" style="left:1411px;top:29px">
<defs><pattern id="chk1" width="2.4" height="2.4" patternUnits="userSpaceOnUse"><rect width="2.4" height="2.4" fill="#77787c"/><rect width="1.2" height="1.2" fill="#0e0e10"/><rect x="1.2" y="1.2" width="1.2" height="1.2" fill="#0e0e10"/></pattern></defs>
<circle cx="1421.600" cy="37.900" r="5.400" fill="#1c1c1e" stroke="#fdfdfd" stroke-width="2.300"/>
<rect x="1435.200" y="30.800" width="14.200" height="14.200" fill="url(#chk1)"/>
<rect x="1459.300" y="34" width="10.300" height="10.200" fill="#fcfcfc"/>
<rect x="1456.300" y="31" width="10.600" height="10.500" fill="#4db6fb" stroke="#2f9ae6" stroke-width=".6"/>
<path d="M1474.800,36.500 h8 l-4,4.300 z" fill="#3a3a3c"/>
</svg>
<svg width="20" height="15" viewBox="1365 0 20 15" style="left:1365px;top:0">
<rect x="1367" y="9.700" width="14.200" height="2.600" fill="#050505"/><rect x="1367" y="12.300" width="15" height="1.200" fill="#f2f2f2"/>
<path d="M1368.500,6.800 C1370.300,7.300 1371.800,8.300 1373,10.200 C1375,6 1378,2.500 1382.500,-0.500" fill="none" stroke="#e01318" stroke-width="1.500"/>
</svg>
<svg width="12" height="10" style="left:1350.5px;top:0.5px"><path d="M1,0.500 L4.200,4 L1,7.500 Z" fill="#7f8084"/><path d="M5.500,1 h4.500 M5.500,3.900 h4.500 M5.500,6.800 h4.500" stroke="#7f8084" stroke-width="1.200"/></svg>
<div class="a" style="left:1347.5px;top:219.5px;width:151.300px;height:14.3px;background:linear-gradient(#5b5b5c,#454546)"></div>
<div class="a" style="left:1347.5px;top:220px;width:15.5px;height:13.500px;background:linear-gradient(#606164,#515255)"></div>
<svg width="12" height="10" style="left:1350.5px;top:222.5px"><path d="M1,0.500 L4.200,4 L1,7.500 Z" fill="#7f8084"/><path d="M5.500,1 h4.500 M5.500,3.900 h4.500 M5.500,6.800 h4.500" stroke="#7f8084" stroke-width="1.200"/></svg>
<div class="a" style="left:1363.7px;top:221.5px;width:58.5px;height:13px;background:#7a7b7f;border-radius:2px 2px 0 0;border-top:1px solid #8d8e91"></div>
<div class="t" style="left:1386.5px;top:224.300px;font-size:9px;letter-spacing:-0.95px;color:#d8d8db">レイヤー</div>
<svg width="18" height="16" viewBox="1366 221 18 16" style="left:1366px;top:221px">
<g stroke="#111" stroke-width=".9"><ellipse cx="1375" cy="233" rx="6.300" ry="2.300" fill="#fafafa"/><ellipse cx="1375" cy="229.300" rx="6.300" ry="2.300" fill="#111"/><ellipse cx="1375" cy="229" rx="6" ry="2" fill="#d6d6d6" stroke="none" opacity=".0"/><ellipse cx="1375" cy="225.800" rx="6.300" ry="2.300" fill="#8e8f92"/></g>
<path d="M1368.800,229.300 C1371,231 1379,231 1381.300,229.300" stroke="#f4f4f4" stroke-width=".8" fill="none"/>
<path d="M1368.800,225.800 C1371,227.600 1379,227.600 1381.300,225.800" stroke="#e4e4e4" stroke-width=".7" fill="none"/>
</svg>
<div class="a" style="left:1348.5px;top:239px;width:74.300px;height:15.800px;border:1px solid #55565a;border-radius:2.5px;background:linear-gradient(#7f8084,#696a6e 50%,#606165);box-shadow:inset 0 1px 0 #909194"></div>
<div class="t" style="left:1369px;top:242px;font-size:10.500px;letter-spacing:-0.3px;color:#f4f4f4">通常</div>
<svg width="10" height="6" style="left:1412.800px;top:245px"><path d="M0,0 H8.400 L4.200,4.600 Z" fill="#38383a"/></svg>
<svg width="75" height="20" viewBox="1426 237 75 20" style="left:1426px;top:237px;font-family:'Liberation Sans',sans-serif">
<defs><pattern id="chk2" width="7" height="7" patternUnits="userSpaceOnUse" x="1428.300" y="243"><rect width="7" height="7" fill="#fff"/><rect x="3.500" width="3.500" height="3.500" fill="#c9c9cc"/><rect y="3.500" width="3.500" height="3.500" fill="#c9c9cc"/></pattern>
<linearGradient id="opf" x1="0" x2="1"><stop offset="0" stop-color="#fff" stop-opacity="0"/><stop offset="1" stop-color="#f2f2f2" stop-opacity=".85"/></linearGradient></defs>
<rect x="1428.300" y="243" width="37" height="6.800" fill="url(#chk2)"/><rect x="1428.300" y="243" width="37" height="6.800" fill="url(#opf)"/>
<rect x="1428" y="242.600" width="37.500" height="7.500" fill="none" stroke="#5c5d60" stroke-width=".8"/>
<rect x="1465.300" y="238" width="2.300" height="17.500" fill="#696a6e" stroke="#5a5b5e" stroke-width=".5"/>
<text x="1472.800" y="250.200" font-size="10" fill="#f4f4f4" textLength="13.300" lengthAdjust="spacingAndGlyphs">100</text>
<path d="M1489,245 h8 l-4,-4.200 z M1489,248.500 h8 l-4,4.200 z" fill="#343436"/>
</svg>
<svg width="152" height="18" viewBox="1348 256 152 18" style="left:1348px;top:256px">
<defs><linearGradient id="lkg" x1="0" x2="0" y1="0" y2="1"><stop offset="0" stop-color="#8d8e91"/><stop offset="1" stop-color="#3f3f42"/></linearGradient>
<linearGradient id="lhg" x1="0" x2="0" y1="0" y2="1"><stop offset="0" stop-color="#1a1a1c"/><stop offset=".5" stop-color="#5a5a5d"/><stop offset="1" stop-color="#e9e9ea"/></linearGradient></defs>
<!-- clip mask -->
<ellipse cx="1382" cy="266.500" rx="6.500" ry="3.700" fill="#7f8084" stroke="#1d1d1f" stroke-width="1"/>
<ellipse cx="1382" cy="263.300" rx="6.500" ry="3.600" fill="#e6e6e8" stroke="#1d1d1f" stroke-width="1"/>
<ellipse cx="1382" cy="264.300" rx="5.200" ry="2.500" fill="#131315"/>
<path d="M1375.500,263.300 v3.200 M1388.500,263.300 v3.200" stroke="#1d1d1f" stroke-width="1"/>
<!-- lighthouse -->
<path d="M1397.300,259.600 h3.400 l1.600,12.400 h-6.600 z" fill="url(#lhg)"/><path d="M1397.600,258.300 h2.800 v1.600 h-2.800 z" fill="#111"/><path d="M1398,257.300 h2 l-1,-1 z" fill="#111"/>
<path d="M1393.500,258 l3,1.300 M1393.300,261.300 l3.200,-0.500 M1404.500,258 l-3,1.300 M1404.700,261.300 l-3.200,-0.500" stroke="#b4b5b8" stroke-width=".8"/>
<!-- lock -->
<path d="M1412.700,264 v-2.300 a3.300,3.300 0 0 1 6.600,0 V264" fill="none" stroke="#2a2a2c" stroke-width="1.900"/>
<rect x="1410.300" y="263.600" width="11.400" height="8.400" rx=".8" fill="url(#lkg)" stroke="#1f1f21" stroke-width=".9"/><rect x="1415.400" y="266.300" width="1.300" height="3.200" fill="#111"/>
<!-- lock transparent (disabled) -->
<g opacity=".8"><path d="M1428.300,262.500 v-1.700 a2.200,2.200 0 0 1 4.400,0 v1.700" fill="none" stroke="#66676b" stroke-width="1.200"/><rect x="1426.800" y="262.300" width="7.400" height="5.600" fill="#8a8b8f" stroke="#696a6e" stroke-width=".8"/>
<path d="M1434,265 h7 M1434,268 h7 M1434,271 h7 M1435.500,264.500 v7.500 M1438.500,264.500 v7.500" stroke="#8d8e92" stroke-width="1"/></g>
<!-- disabled buttons -->
<rect x="1443.300" y="257.300" width="25.500" height="15.600" rx="2" fill="#828387" stroke="#6c6d71" stroke-width=".9"/>
<rect x="1446.500" y="259" width="11" height="12" fill="#8a8b8f" opacity=".8"/><path d="M1448.500,264 l3,-3 l2,3 l3,-2 l-1,5 l-5,1 z" fill="#7b7c80"/><path d="M1453.500,266.500 l5,5 M1458.500,266.500 l-5,5" stroke="#66676b" stroke-width="1.200"/><path d="M1459.500,263.500 h7 l-3.500,3.800 z" fill="#6d6e72"/>
<rect x="1472" y="257.300" width="25.500" height="15.600" rx="2" fill="#828387" stroke="#6c6d71" stroke-width=".9"/>
<path d="M1475,259.500 v11.500 h5 M1475,259.500 h9 l-9,11.500 M1486,259 l-9,12" stroke="#6e6f73" stroke-width="1.100" fill="none"/><path d="M1482.500,266.500 l5,5 M1487.500,266.500 l-5,5" stroke="#66676b" stroke-width="1.200"/><path d="M1488.500,263.500 h7 l-3.500,3.800 z" fill="#6d6e72"/>
</svg>
<div class="a" style="left:1347.500px;top:276px;width:151.300px;height:571.500px;border:1.2px solid #58595c;background:#7a7b7f"></div>
<div class="a" style="left:1348.5px;top:277px;width:3px;height:569px;background:#727377;border-right:1px solid #5e5f62"></div>
<div class="a" style="left:1488.3px;top:277px;width:9.800px;height:569.500px;background:#6b6c70;border-top:1.300px solid #4e4f52;border-left:1px solid #626367"></div>
<div class="a" style="left:1489.3px;top:842px;width:8.800px;height:3.500px;background:linear-gradient(#8d8e91,#77787c)"></div>
<div class="a" style="left:1347.500px;top:847px;width:151.300px;height:2px;border:1px solid #5e5f62;border-top:0"></div>
<div class="a" style="left:1368px;top:277px;width:1.1px;height:192px;background:#47484b"></div>
<div class="a" style="left:1383px;top:277px;width:1.100px;height:192px;background:#55565a"></div>
<div class="a" style="left:1384.500px;top:301.5px;width:103.800px;height:27.5px;background:linear-gradient(#7b9aad,#6c8899 55%,#647e8e)"></div>
<div class="a" style="left:1396px;top:300.6px;width:92.3px;height:1.2px;background:#505154"></div>
<div class="a" style="left:1351.5px;top:329px;width:137px;height:1.2px;background:#505154"></div>
<div class="a" style="left:1396.5px;top:354.6px;width:92px;height:1.2px;background:#505154"></div>
<div class="a" style="left:1417px;top:383.2px;width:71.3px;height:1.2px;background:#505154"></div>
<div class="a" style="left:1417px;top:411.8px;width:71.3px;height:1.2px;background:#505154"></div>
<div class="a" style="left:1351.5px;top:440px;width:137px;height:1.2px;background:#48494c"></div>
<div class="a" style="left:1351.5px;top:468.6px;width:137px;height:1.2px;background:#48494c"></div>
<svg width="14" height="10" viewBox="0 0 14 10" style="left:1352.500px;top:285px"><path d="M1,4.800 C3,1.600 8.500,0.300 12.800,3.900 C10.200,8.200 3.800,8.300 1,4.800 Z" fill="#dcdcde" stroke="#2a2a2c" stroke-width=".8"/><ellipse cx="7" cy="4.500" rx="3.500" ry="3" fill="#0c0c0e"/><ellipse cx="5.600" cy="3.300" rx="1.100" ry=".8" fill="#fff"/></svg>
<svg width="14" height="10" viewBox="0 0 14 10" style="left:1352.500px;top:311px"><path d="M1,4.800 C3,1.600 8.500,0.300 12.800,3.900 C10.200,8.200 3.800,8.300 1,4.800 Z" fill="#dcdcde" stroke="#2a2a2c" stroke-width=".8"/><ellipse cx="7" cy="4.500" rx="3.500" ry="3" fill="#0c0c0e"/><ellipse cx="5.600" cy="3.300" rx="1.100" ry=".8" fill="#fff"/></svg>
<svg width="14" height="10" viewBox="0 0 14 10" style="left:1352.500px;top:337px"><path d="M1,4.800 C3,1.600 8.500,0.300 12.800,3.900 C10.200,8.200 3.800,8.300 1,4.800 Z" fill="#dcdcde" stroke="#2a2a2c" stroke-width=".8"/><ellipse cx="7" cy="4.500" rx="3.500" ry="3" fill="#0c0c0e"/><ellipse cx="5.600" cy="3.300" rx="1.100" ry=".8" fill="#fff"/></svg>
<svg width="14" height="10" viewBox="0 0 14 10" style="left:1352.500px;top:364px"><path d="M1,4.800 C3,1.600 8.500,0.300 12.800,3.900 C10.200,8.200 3.800,8.300 1,4.800 Z" fill="#dcdcde" stroke="#2a2a2c" stroke-width=".8"/><ellipse cx="7" cy="4.500" rx="3.500" ry="3" fill="#0c0c0e"/><ellipse cx="5.600" cy="3.300" rx="1.100" ry=".8" fill="#fff"/></svg>
<svg width="14" height="10" viewBox="0 0 14 10" style="left:1352.500px;top:392.5px"><path d="M1,4.800 C3,1.600 8.500,0.300 12.800,3.900 C10.200,8.200 3.800,8.300 1,4.800 Z" fill="#dcdcde" stroke="#2a2a2c" stroke-width=".8"/><ellipse cx="7" cy="4.500" rx="3.500" ry="3" fill="#0c0c0e"/><ellipse cx="5.600" cy="3.300" rx="1.100" ry=".8" fill="#fff"/></svg>
<svg width="14" height="10" viewBox="0 0 14 10" style="left:1352.500px;top:421px"><path d="M1,4.800 C3,1.600 8.500,0.300 12.800,3.900 C10.200,8.200 3.800,8.300 1,4.800 Z" fill="#dcdcde" stroke="#2a2a2c" stroke-width=".8"/><ellipse cx="7" cy="4.500" rx="3.500" ry="3" fill="#0c0c0e"/><ellipse cx="5.600" cy="3.300" rx="1.100" ry=".8" fill="#fff"/></svg>
<svg width="14" height="10" viewBox="0 0 14 10" style="left:1352.500px;top:449px"><path d="M1,4.800 C3,1.600 8.500,0.300 12.800,3.900 C10.200,8.200 3.800,8.300 1,4.800 Z" fill="#dcdcde" stroke="#2a2a2c" stroke-width=".8"/><ellipse cx="7" cy="4.500" rx="3.500" ry="3" fill="#0c0c0e"/><ellipse cx="5.600" cy="3.300" rx="1.100" ry=".8" fill="#fff"/></svg>
<div class="a" style="left:1372px;top:284px;width:8.500px;height:10px;border:1px solid #85868a;border-top-color:#707175;border-left-color:#707175"></div>
<div class="a" style="left:1372px;top:336px;width:8.500px;height:10px;border:1px solid #85868a;border-top-color:#707175;border-left-color:#707175"></div>
<div class="a" style="left:1372px;top:363.5px;width:8.500px;height:10px;border:1px solid #85868a;border-top-color:#707175;border-left-color:#707175"></div>
<div class="a" style="left:1372px;top:392px;width:8.500px;height:10px;border:1px solid #85868a;border-top-color:#707175;border-left-color:#707175"></div>
<div class="a" style="left:1372px;top:420.5px;width:8.500px;height:10px;border:1px solid #85868a;border-top-color:#707175;border-left-color:#707175"></div>
<div class="a" style="left:1372px;top:448.5px;width:8.500px;height:10px;border:1px solid #85868a;border-top-color:#707175;border-left-color:#707175"></div>
<svg width="12" height="12" viewBox="0 0 12 12" style="left:1369.500px;top:309.500px"><path d="M0.500,10.500 C3,10 5.500,8 8.800,3.500" stroke="#1d1d1f" stroke-width="1.800" fill="none"/><path d="M2,9.800 C4,9 6,7 8,4" stroke="#dedee0" stroke-width=".9" fill="none"/><path d="M8,3.800 L10.800,0.800" stroke="#1d1d1f" stroke-width="2.200"/></svg>
<svg width="9" height="6" style="left:1386px;top:289.3px"><path d="M0,0 H8.400 L4.200,4.600 Z" fill="#f6f6f6"/></svg>
<svg width="9" height="6" style="left:1386px;top:341.5px"><path d="M0,0 H8.400 L4.200,4.600 Z" fill="#f6f6f6"/></svg>
<svg width="9" height="6" style="left:1399.8px;top:369px"><path d="M0,0 H8.400 L4.200,4.600 Z" fill="#f6f6f6"/></svg>
<svg width="7" height="10" style="left:1402.500px;top:311.500px"><path d="M0,0 V8.600 L5.600,4.300 Z" fill="#f6f6f6"/></svg>
<svg width="20" height="15" viewBox="0 0 20 15" style="left:1397.300px;top:282.6px">
<rect x="1" y="3" width="13" height="10.500" fill="#8b8c90" stroke="#4d4e51" stroke-width=".8"/>
<rect x="3" y="0.600" width="12.500" height="9.500" fill="#efeff1" stroke="#3b3b3d" stroke-width=".9"/>
<rect x="3.500" y="1" width="11.500" height="1.900" fill="#505053"/><path d="M4.800,1.950 h1.600 M8.200,1.950 h1.600 M11.800,1.950 h1.600" stroke="#fff" stroke-width="1"/>
<rect x="4.300" y="3.700" width="9.500" height="3.800" fill="#ef8fd5"/><rect x="5.500" y="4.900" width="7" height="2.600" fill="#e8d8e6"/>
<rect x="6.800" y="6.800" width="10.500" height="2.600" rx=".6" fill="#6c6d71" stroke="#434346" stroke-width=".8"/>
<path d="M6.800,9.500 V12 H14" stroke="#55565a" stroke-width=".8" fill="none"/>
</svg>
<svg width="20" height="15" viewBox="0 0 20 15" style="left:1397.300px;top:335px">
<rect x="1" y="3" width="13" height="10.500" fill="#8b8c90" stroke="#4d4e51" stroke-width=".8"/>
<rect x="3" y="0.600" width="12.500" height="9.500" fill="#efeff1" stroke="#3b3b3d" stroke-width=".9"/>
<rect x="3.500" y="1" width="11.500" height="1.900" fill="#505053"/><path d="M4.800,1.950 h1.600 M8.200,1.950 h1.600 M11.800,1.950 h1.600" stroke="#fff" stroke-width="1"/>
<rect x="4.300" y="3.700" width="9.500" height="3.800" fill="#ef8fd5"/><rect x="5.500" y="4.900" width="7" height="2.600" fill="#e8d8e6"/>
<rect x="6.800" y="6.800" width="10.500" height="2.600" rx=".6" fill="#6c6d71" stroke="#434346" stroke-width=".8"/>
<path d="M6.800,9.500 V12 H14" stroke="#55565a" stroke-width=".8" fill="none"/>
</svg>
<div class="t" style="left:1419px;top:279px;font-size:10.500px;color:#e8e8ea;"><span style="display:inline-block;transform:scaleX(.8);transform-origin:0 50%;letter-spacing:.4px">100 %</span><span style="margin-left:-7.500px;letter-spacing:-0.6px">通常</span></div>
<div class="t" style="left:1418.5px;top:289.5px;font-size:10.5px;letter-spacing:-0.4px;color:#ececee;">髪<span style="letter-spacing:1.200px"> : 1</span></div>
<div class="t" style="left:1419px;top:331.3px;font-size:10.500px;color:#e8e8ea;"><span style="display:inline-block;transform:scaleX(.8);transform-origin:0 50%;letter-spacing:.4px">100 %</span><span style="margin-left:-7.500px;letter-spacing:-0.6px">通常</span></div>
<div class="t" style="left:1418.5px;top:342px;font-size:10.5px;letter-spacing:-0.4px;color:#ececee;">頭<span style="letter-spacing:1.200px"> : 1</span></div>
<div class="t" style="left:1466.3px;top:305.5px;font-size:10.500px;color:#e8e8ea;width:22px;overflow:hidden;"><span style="display:inline-block;transform:scaleX(.8);transform-origin:0 50%;letter-spacing:.4px">100 %</span><span style="margin-left:-7.500px;letter-spacing:-0.6px">通常</span></div>
<div class="t" style="left:1466px;top:317.300px;font-size:10.500px;color:#f2f2f4;transform:scaleX(.82);transform-origin:0 0;letter-spacing:.3px">001</div>
<div class="t" style="left:1466.3px;top:357.5px;font-size:10.500px;color:#e8e8ea;width:22px;overflow:hidden;"><span style="display:inline-block;transform:scaleX(.8);transform-origin:0 50%;letter-spacing:.4px">100 %</span><span style="margin-left:-7.500px;letter-spacing:-0.6px">通常</span></div>
<div class="t" style="left:1466px;top:369.300px;font-size:10.500px;color:#ececee;transform:scaleX(.82);transform-origin:0 0;letter-spacing:.3px">001</div>
<div class="t" style="left:1457.3px;top:386px;font-size:10.500px;color:#e8e8ea;width:27.5px;overflow:hidden;"><span style="display:inline-block;transform:scaleX(.8);transform-origin:0 50%;letter-spacing:.4px">100 %</span><span style="margin-left:-7.500px;letter-spacing:-0.6px">通常</span></div>
<div class="t" style="left:1456.3px;top:397.5px;font-size:10.5px;letter-spacing:-0.4px;color:#ececee;">線</div>
<div class="t" style="left:1457.3px;top:414.8px;font-size:10.500px;color:#e8e8ea;width:27.5px;overflow:hidden;"><span style="display:inline-block;transform:scaleX(.8);transform-origin:0 50%;letter-spacing:.4px">100 %</span><span style="margin-left:-7.500px;letter-spacing:-0.6px">通常</span></div>
<div class="t" style="left:1456.3px;top:426.8px;font-size:10.5px;letter-spacing:-1.2px;color:#ececee;">塗り</div>
<div class="t" style="left:1442.8px;top:455px;font-size:10.5px;letter-spacing:-0.4px;color:#f2f2f4;">用紙</div>
<svg width="160" height="200" viewBox="1340 276 160 200" style="left:1340px;top:276px">
<defs><pattern id="ck" width="7.200" height="7.200" patternUnits="userSpaceOnUse" x="1412" y="303.800"><rect width="7.200" height="7.200" fill="#fff"/><rect x="3.600" width="3.600" height="3.600" fill="#d2d2d4"/><rect y="3.600" width="3.600" height="3.600" fill="#d2d2d4"/></pattern>
<pattern id="ck2" width="7.200" height="7.200" patternUnits="userSpaceOnUse" x="1425" y="387.800"><rect width="7.200" height="7.200" fill="#fff"/><rect x="3.600" width="3.600" height="3.600" fill="#d2d2d4"/><rect y="3.600" width="3.600" height="3.600" fill="#d2d2d4"/></pattern></defs>
<!-- row2 thumb (selected) -->
<rect x="1410.300" y="302.800" width="33" height="26" fill="#0f0f11"/><rect x="1411.400" y="303.900" width="30.800" height="23.800" fill="#86a8bd"/><rect x="1412.300" y="304.800" width="29" height="22" fill="#0f0f11"/>
<rect x="1413" y="305.500" width="27.600" height="20.600" fill="url(#ck)"/>
<path d="M1419.500,317.500 C1420.500,313.500 1423,312.500 1424.300,313 L1424,311.300 C1425.500,311.800 1426.500,311.600 1427.500,310 C1428,311 1429,311.500 1430.500,311.200 C1431.500,312 1433,314.500 1434.800,315 C1434,315.500 1433.600,316 1433.800,317.300 L1432,317 L1431.800,319 L1429.500,317.500 L1428.500,319 L1426.500,316.500 L1425,318.300 L1423.500,317 L1422.500,319.300 L1421.500,317.500 Z" fill="#6a423d"/>
<!-- row4 thumb -->
<rect x="1412.300" y="358.300" width="28.800" height="22.300" fill="url(#ck)" stroke="#0f0f11" stroke-width="1.100"/>
<g transform="translate(1426.500 370.500)"><path d="M-4.300,-0.500 C-5,-4 -2,-6.300 1,-6 C4.300,-5.700 5.300,-3 4.600,0 Z" fill="#6a423d"/><path d="M-4,-1.500 C-2,-3.800 2,-3.800 4.300,-0.800 C4.800,1 4.300,2.300 3,3 C1.500,4 0,4.600 -1.300,4.700 C-3,4 -4,2.500 -4.300,1 Z" fill="#fde9cf"/><circle cx="-2.500" cy="0.800" r=".9" fill="#5aa6c0"/><circle cx="1.600" cy="1.200" r="1.200" fill="#5aa6c0"/></g>
<!-- row5 thumb -->
<rect x="1424.300" y="387" width="28.800" height="21.600" fill="url(#ck2)" stroke="#0f0f11" stroke-width="1.100"/>
<g transform="translate(1438.500 398)" fill="none" stroke="#c9c9cc" stroke-width=".6"><path d="M-4,-1.500 C-2,-3.800 2,-3.800 4.300,-0.800 C4.800,1 4.300,2.300 3,3 C1.500,4 0,4.600 -1.300,4.700 C-3,4 -4,2.500 -4.300,1 Z"/><circle cx="-2.500" cy="0.800" r=".9"/><circle cx="1.600" cy="1.200" r="1.200"/></g>
<!-- row6 thumb -->
<rect x="1424.300" y="415.300" width="28.800" height="22.300" fill="url(#ck2)" stroke="#0f0f11" stroke-width="1.100"/>
<g transform="translate(1438.500 427.300)"><path d="M-4.300,-0.500 C-5,-4 -2,-6.300 1,-6 C4.300,-5.700 5.300,-3 4.600,0 Z" fill="#6a423d"/><path d="M-4,-1.500 C-2,-3.800 2,-3.800 4.300,-0.800 C4.800,1 4.300,2.300 3,3 C1.500,4 0,4.600 -1.300,4.700 C-3,4 -4,2.500 -4.300,1 Z" fill="#fde9cf"/><circle cx="-2.500" cy="0.800" r=".9" fill="#5aa6c0"/><circle cx="1.600" cy="1.200" r="1.200" fill="#5aa6c0"/></g>
<!-- paper row -->
<rect x="1389.800" y="444.300" width="29" height="21.500" fill="#fff" stroke="#111113" stroke-width="1.100"/>
<rect x="1424.300" y="443" width="17" height="17" fill="#fff" stroke="#1b1b1d" stroke-width="1"/>
<path d="M1427.500,445 h6.500 l4.300,4 v9 h-10.800 z" fill="#eef4f8" stroke="#2a2a2c" stroke-width=".9"/><path d="M1434,445 v4 h4.300" fill="none" stroke="#2a2a2c" stroke-width=".8"/>
<!-- folder icons -->
<path d="M1450,309.800 h3.300 l1,1.200 h6.300 v6.200 h-10.600 z" fill="#ffffb4" stroke="#4a4a30" stroke-width=".7"/>
<path d="M1450.300,369.500 v-6.500 h3 l1,1.200 h4.500 v1.300" fill="#ffffb4" stroke="#4a4a30" stroke-width=".7"/><path d="M1450.300,369.800 L1453,365.300 h8.500 l-2.800,4.500 z" fill="#3a3a3c" stroke="#2a2a2c" stroke-width=".6"/><path d="M1450.600,369 L1452.800,365.300 L1451,363.500 Z" fill="#ffffb4"/>
</svg>
<div class="a" style="left:1416px;top:847.800px;width:15.500px;height:1.200px;background:repeating-linear-gradient(90deg,#4a4b4e 0 1.300px,transparent 1.300px 3.500px)"></div>
<svg width="140" height="17" viewBox="1360 850 140 17" style="left:1360px;top:850px">
<defs><linearGradient id="pg" x1="0" x2="0" y1="0" y2="1"><stop offset="0" stop-color="#e6f0f8"/><stop offset=".5" stop-color="#fff"/><stop offset="1" stop-color="#f2f2f2"/></linearGradient>
<linearGradient id="fg" x1="0" x2="1" y1="0" y2="0"><stop offset="0" stop-color="#bdbec1"/><stop offset="1" stop-color="#707174"/></linearGradient>
<linearGradient id="mg" x1="0" x2="1" y1="0" y2="0"><stop offset="0" stop-color="#8a8b8e"/><stop offset=".45" stop-color="#1a1a1c"/><stop offset="1" stop-color="#0f0f11"/></linearGradient></defs>
<!-- new raster -->
<path d="M1364.500,852 h11 v8.500 l-3.500,4 h-7.500 z" fill="url(#pg)" stroke="#2f2f31" stroke-width=".9"/><path d="M1375.500,860.500 h-3.500 v4" fill="#d9d9db" stroke="#2f2f31" stroke-width=".7"/>
<!-- new vector -->
<path d="M1380.500,851.800 h10.500 v12.700 h-10.500 z" fill="url(#pg)" stroke="#2f2f31" stroke-width=".9"/><rect x="1388.300" y="860" width="5.500" height="5.200" fill="#e6e6e8" stroke="#38383a" stroke-width=".7"/><path d="M1388.300,862.600 h5.500 M1391,860 v5.200" stroke="#38383a" stroke-width=".6"/>
<!-- new folder -->
<path d="M1397,853.500 h4 l1,-1 h7.500 v9.500 h-12.500 z" fill="url(#fg)" stroke="#4b4c4f" stroke-width=".7"/><path d="M1404.300,856.300 h6.500 v5.500 l-2,2.300 h-4.500 z" fill="#f7f9fb" stroke="#2f2f31" stroke-width=".9"/>
<!-- disabled transfers -->
<g fill="#6f7074" opacity=".95"><path d="M1415.500,859.500 l6,-3 l6,3 l-6,3 z M1415.500,856 l6,-3 l6,3 l-6,3 z" fill="#858689"/><path d="M1421.500,852.500 v6 M1419,856.500 l2.500,2.500 l2.500,-2.500" stroke="#66676b" stroke-width="1.200" fill="none"/>
<path d="M1415.500,862 l6,3 l6,-3" stroke="#6b6c70" stroke-width="1" fill="none"/>
<path d="M1432.500,859.500 l6,-3 l6,3 l-6,3 z" fill="#858689"/><path d="M1438.500,853 v7 M1436,857.500 l2.500,2.500 l2.500,-2.500" stroke="#66676b" stroke-width="1.300" fill="none"/><path d="M1432.500,862 l6,3 l6,-3" stroke="#6b6c70" stroke-width="1" fill="none"/></g>
<!-- mask -->
<rect x="1449.300" y="854.300" width="13.500" height="7.700" fill="url(#mg)"/><circle cx="1456.300" cy="858.200" r="2.200" fill="#fbfbfb"/>
<!-- disabled -->
<g opacity=".9"><path d="M1468.500,852.500 v11" stroke="#66676b" stroke-width="1.300"/><path d="M1466.500,861 l2,2.500 l2,-2.500" stroke="#66676b" stroke-width="1.100" fill="none"/><path d="M1471,854 l6,2.500 l-6,3 z M1472,858.500 l7,3 l-7,3 z" fill="#87888c"/><circle cx="1475" cy="856" r="1.700" fill="#6f7074"/></g>
<!-- trash -->
<path d="M1485.200,855 h10 l-1.300,9.300 h-7.400 z" fill="#f2f2f4" stroke="#3b3b3d" stroke-width=".8"/><path d="M1484.500,854.300 h11.400" stroke="#2a2a2c" stroke-width="1.300"/><path d="M1486.500,853.300 C1487.500,851 1493,851 1494,853.300" fill="#b9e0dc" stroke="#3b3b3d" stroke-width=".8"/><path d="M1488,857 l.4,6 M1490.300,857 v6 M1492.600,857 l-.4,6" stroke="#a9aaad" stroke-width=".8"/>
</svg>
</body>
</html>
